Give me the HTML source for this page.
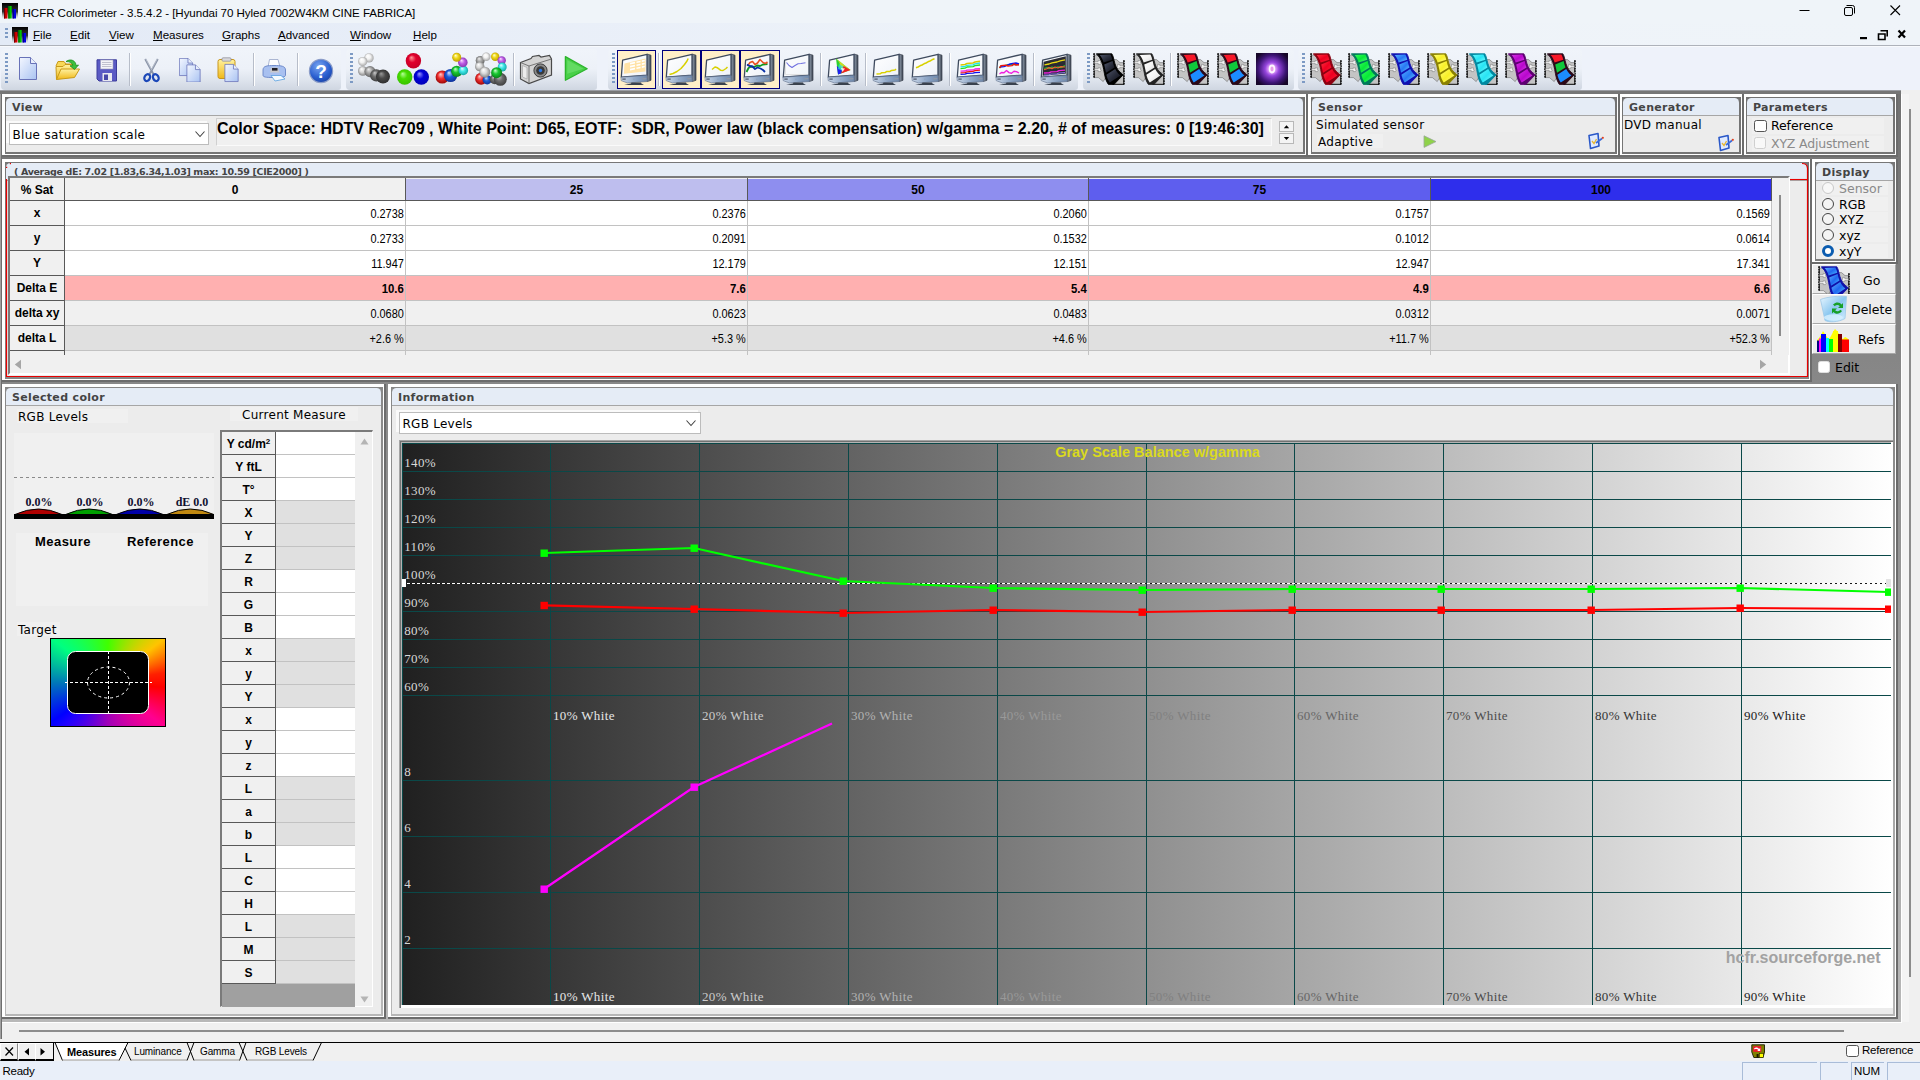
<!DOCTYPE html><html lang="en"><head><meta charset="utf-8"><title>HCFR Colorimeter</title><style>
html,body{margin:0;padding:0}
body{width:1920px;height:1080px;overflow:hidden;background:#fff;position:relative;font-family:"Liberation Sans",sans-serif;font-size:12px;color:#000}
div,span,svg{position:absolute;box-sizing:border-box}
.vd{font-family:"DejaVu Sans","Liberation Sans",sans-serif}
.t{white-space:nowrap;line-height:1}
.w{background:#fff}
.g{background:#828282}
.pnl{background:#767676}
.hd{left:1px;top:1px;right:2px;height:17px;background:#e5ecf6;border-radius:4.5px 4.5px 0 0;font:bold 11px "DejaVu Sans","Liberation Sans",sans-serif;color:#444;padding-left:6px;line-height:20px;white-space:nowrap;letter-spacing:.33px}
.hl{left:1px;right:2px;top:18px;height:1px;background:#a6a6a6}
.bd{left:1px;top:19px;right:2px;bottom:2px;background:#ececec}
.lb{background:#f0f0f0;white-space:nowrap;font:12px "DejaVu Sans","Liberation Sans",sans-serif;line-height:16px;letter-spacing:.26px}
.rb{width:12px;height:12px;border-radius:50%;border:1px solid #444;background:#f4f4f4}
.cb{width:12px;height:12px;border-radius:2.5px;border:1px solid #555;background:#fff}
.tb{top:49px;height:41px;border-radius:4px 3px 3px 4px;background:linear-gradient(#f0f4fa 0%,#edf1f8 48%,#dfe5ee 74%,#cfd6e1 100%)}
.grip{left:4px;top:4px;width:3px;height:31px;background:repeating-linear-gradient(#7d9ac4 0 2px,transparent 2px 4px)}
.sep{top:4px;width:2px;height:33px;border-left:1px solid #b7bdc9;border-right:1px solid #fff}
.sel{top:1px;height:39px;background:#ffefc8;border:1px solid #00007c}
.gh{background:#f0f0f0;font:bold 12px "Liberation Sans",sans-serif;text-align:center;white-space:nowrap}
.gc{font:13px "Liberation Sans",sans-serif;text-align:right;white-space:nowrap;transform-origin:100% 50%}
</style></head><body>
<svg width="0" height="0" style="left:0;top:0"><defs><radialGradient id="bW" cx=".5" cy=".5" r=".55" fx=".36" fy=".28"><stop offset="0" stop-color="#ffffff"/><stop offset=".45" stop-color="#f2f2f2"/><stop offset="1" stop-color="#9c9c9c"/></radialGradient><radialGradient id="bL" cx=".5" cy=".5" r=".55" fx=".36" fy=".28"><stop offset="0" stop-color="#ffffff"/><stop offset=".45" stop-color="#dadada"/><stop offset="1" stop-color="#7c7c7c"/></radialGradient><radialGradient id="bG" cx=".5" cy=".5" r=".55" fx=".36" fy=".28"><stop offset="0" stop-color="#f0f0f0"/><stop offset=".45" stop-color="#a8a8a8"/><stop offset="1" stop-color="#5e5e5e"/></radialGradient><radialGradient id="bD" cx=".5" cy=".5" r=".55" fx=".36" fy=".28"><stop offset="0" stop-color="#c8c8c8"/><stop offset=".45" stop-color="#6c6c6c"/><stop offset="1" stop-color="#3a3a3a"/></radialGradient><radialGradient id="bK" cx=".5" cy=".5" r=".55" fx=".36" fy=".28"><stop offset="0" stop-color="#9a9a9a"/><stop offset=".45" stop-color="#4a4a4a"/><stop offset="1" stop-color="#2a2a2a"/></radialGradient><radialGradient id="bR" cx=".5" cy=".5" r=".55" fx=".36" fy=".28"><stop offset="0" stop-color="#ff9a9a"/><stop offset=".45" stop-color="#e0002c"/><stop offset="1" stop-color="#c40026"/></radialGradient><radialGradient id="bGr" cx=".5" cy=".5" r=".55" fx=".36" fy=".28"><stop offset="0" stop-color="#b6ff9a"/><stop offset=".45" stop-color="#46dc00"/><stop offset="1" stop-color="#38c000"/></radialGradient><radialGradient id="bB" cx=".5" cy=".5" r=".55" fx=".36" fy=".28"><stop offset="0" stop-color="#9a9aff"/><stop offset=".45" stop-color="#0000d8"/><stop offset="1" stop-color="#0000b4"/></radialGradient><radialGradient id="cR" cx=".5" cy=".5" r=".55" fx=".36" fy=".28"><stop offset="0" stop-color="#ffd0d0"/><stop offset=".45" stop-color="#f03030"/><stop offset="1" stop-color="#900000"/></radialGradient><radialGradient id="cB" cx=".5" cy=".5" r=".55" fx=".36" fy=".28"><stop offset="0" stop-color="#d0e4ff"/><stop offset=".45" stop-color="#1c5cd8"/><stop offset="1" stop-color="#0a2a90"/></radialGradient><radialGradient id="cG" cx=".5" cy=".5" r=".55" fx=".36" fy=".28"><stop offset="0" stop-color="#d0ffd0"/><stop offset=".45" stop-color="#18c830"/><stop offset="1" stop-color="#087818"/></radialGradient><radialGradient id="cC" cx=".5" cy=".5" r=".55" fx=".36" fy=".28"><stop offset="0" stop-color="#e8ffff"/><stop offset=".45" stop-color="#40e8e8"/><stop offset="1" stop-color="#10a0a0"/></radialGradient><radialGradient id="cP" cx=".5" cy=".5" r=".55" fx=".36" fy=".28"><stop offset="0" stop-color="#ffe0ff"/><stop offset=".45" stop-color="#c060e8"/><stop offset="1" stop-color="#8030a8"/></radialGradient><radialGradient id="cY" cx=".5" cy=".5" r=".55" fx=".36" fy=".28"><stop offset="0" stop-color="#ffffd8"/><stop offset=".45" stop-color="#f0d818"/><stop offset="1" stop-color="#b89800"/></radialGradient><linearGradient id="mB" x1="0" y1="0" x2="1" y2="0"><stop offset="0" stop-color="#c9d6e8"/><stop offset=".55" stop-color="#8ea6c6"/><stop offset="1" stop-color="#6f88aa"/></linearGradient><linearGradient id="mS" x1="0" y1="0" x2="1" y2="0"><stop offset="0" stop-color="#9aa7b8"/><stop offset="1" stop-color="#3a424e"/></linearGradient><linearGradient id="mW" x1="0" y1="0" x2="1" y2="1"><stop offset="0" stop-color="#ffffff"/><stop offset="1" stop-color="#eef2f8"/></linearGradient><linearGradient id="pg" x1="0" y1="0" x2="1" y2="1"><stop offset="0" stop-color="#f4f7ff"/><stop offset="1" stop-color="#a9c3f2"/></linearGradient><linearGradient id="ic" x1="0" y1="0" x2="0" y2="1"><stop offset="0" stop-color="#000"/><stop offset=".55" stop-color="#333"/><stop offset="1" stop-color="#bbb" stop-opacity="0"/></linearGradient><radialGradient id="hp" cx=".4" cy=".3" r=".8"><stop offset="0" stop-color="#7aa6f0"/><stop offset=".6" stop-color="#2a5fd0"/><stop offset="1" stop-color="#163c9c"/></radialGradient><radialGradient id="pu" cx=".5" cy=".5" r=".6"><stop offset="0" stop-color="#ffffff"/><stop offset=".14" stop-color="#f0b4ff"/><stop offset=".36" stop-color="#9444dc"/><stop offset=".72" stop-color="#3c1474"/><stop offset="1" stop-color="#160628"/></radialGradient><linearGradient id="fo" x1="0" y1="0" x2="0" y2="1"><stop offset="0" stop-color="#fff2a0"/><stop offset="1" stop-color="#f0b818"/></linearGradient><linearGradient id="bin" x1="0" y1="0" x2="1" y2="1"><stop offset="0" stop-color="#e8f6ff"/><stop offset=".5" stop-color="#8cc8f0"/><stop offset="1" stop-color="#d8f0ff"/></linearGradient></defs></svg>
<div style="left:0px;top:0px;width:1920px;height:23px;background:#eff4f9"></div>
<svg style="left:2px;top:3px" width="16" height="16" viewBox="0 0 16 16" ><rect x="0" y="0" width="16" height="16" fill="url(#ic)"/><rect x="2" y="5" width="3.4" height="10.5" fill="#d80000"/><rect x="2" y="5" width="1.2" height="10.5" fill="#700000"/><rect x="6.3" y="3" width="3.4" height="12.5" fill="#00c000"/><rect x="6.3" y="3" width="1.2" height="12.5" fill="#006000"/><rect x="10.6" y="6" width="3.4" height="9.5" fill="#0000e0"/><rect x="10.6" y="6" width="1.2" height="9.5" fill="#000070"/></svg>
<div class="t" style="left:22.5px;top:6.5px;font-size:11.6px;letter-spacing:-.06px" id="ttl">HCFR Colorimeter - 3.5.4.2 - [Hyundai 70 Hyled 7002W4KM CINE FABRICA]</div>
<svg style="left:1795px;top:0px" width="120" height="23" viewBox="0 0 120 23" ><path d="M4.5 10.5H14.5" stroke="#000" stroke-width="1" fill="none"/><rect x="49.5" y="7.5" width="8" height="8" rx="1.5" fill="none" stroke="#000"/><path d="M51.5 5.5H57.5a2 2 0 0 1 2 2V13.5" fill="none" stroke="#000"/><path d="M95.5 5.5L105 15M105 5.5L95.5 15" stroke="#000" stroke-width="1.1" fill="none"/></svg>
<div style="left:0px;top:23px;width:1920px;height:22px;background:linear-gradient(90deg,#e3eaf6 0%,#e8eef8 25%,#eef3f9 55%,#eff4f9 100%)"></div>
<div style="left:0px;top:45px;width:1920px;height:1px;background:#aeb2ba"></div>
<div style="left:0px;top:46px;width:1920px;height:1px;background:#f8fafd"></div>
<div style="left:5px;top:28px;width:3px;height:11px;background:repeating-linear-gradient(#7d9ac4 0 2px,transparent 2px 4px)"></div>
<svg style="left:12px;top:27px" width="16" height="16" viewBox="0 0 16 16" ><rect x="0" y="0" width="16" height="16" fill="url(#ic)"/><rect x="2" y="5" width="3.4" height="10.5" fill="#d80000"/><rect x="2" y="5" width="1.2" height="10.5" fill="#700000"/><rect x="6.3" y="3" width="3.4" height="12.5" fill="#00c000"/><rect x="6.3" y="3" width="1.2" height="12.5" fill="#006000"/><rect x="10.6" y="6" width="3.4" height="9.5" fill="#0000e0"/><rect x="10.6" y="6" width="1.2" height="9.5" fill="#000070"/></svg>
<div class="t" style="left:33px;top:29px;font-size:11.6px"><span style="position:static;text-decoration:underline">F</span>ile</div>
<div class="t" style="left:70px;top:29px;font-size:11.6px"><span style="position:static;text-decoration:underline">E</span>dit</div>
<div class="t" style="left:109px;top:29px;font-size:11.6px"><span style="position:static;text-decoration:underline">V</span>iew</div>
<div class="t" style="left:153px;top:29px;font-size:11.6px"><span style="position:static;text-decoration:underline">M</span>easures</div>
<div class="t" style="left:222px;top:29px;font-size:11.6px"><span style="position:static;text-decoration:underline">G</span>raphs</div>
<div class="t" style="left:278px;top:29px;font-size:11.6px"><span style="position:static;text-decoration:underline">A</span>dvanced</div>
<div class="t" style="left:350px;top:29px;font-size:11.6px"><span style="position:static;text-decoration:underline">W</span>indow</div>
<div class="t" style="left:413px;top:29px;font-size:11.6px"><span style="position:static;text-decoration:underline">H</span>elp</div>
<svg style="left:1856px;top:26px" width="56" height="18" viewBox="0 0 56 18" ><rect x="4" y="11" width="7" height="2.2" fill="#000"/><path d="M24.5 4.8H31.2V10.5M22.5 8H29V13.5H22.5Z" fill="none" stroke="#000" stroke-width="1.6"/><path d="M42.5 4.5L49 11.5M49 4.5L42.5 11.5" stroke="#000" stroke-width="2.2" fill="none"/></svg>
<div style="left:0px;top:47px;width:1920px;height:43px;background:#eef2fa"></div>
<div class="tb" style="left:1px;width:340px"><div class="grip"></div></div>
<div class="tb" style="left:346px;width:251px"><div class="grip"></div></div>
<div class="tb" style="left:608px;width:470px"><div class="grip"></div></div>
<div class="tb" style="left:1083px;width:211px"><div class="grip"></div></div>
<div class="tb" style="left:1298px;width:284px"><div class="grip"></div></div>
<div class="sep" style="left:129px;top:53px"></div>
<div class="sep" style="left:253px;top:53px"></div>
<div class="sep" style="left:297px;top:53px"></div>
<div class="sep" style="left:513px;top:53px"></div>
<div class="sep" style="left:658px;top:53px"></div>
<div class="sep" style="left:820px;top:53px"></div>
<div class="sep" style="left:865px;top:53px"></div>
<div class="sep" style="left:949px;top:53px"></div>
<div class="sep" style="left:1033px;top:53px"></div>
<div class="sep" style="left:1170px;top:53px"></div>
<svg style="left:19px;top:57px" width="19" height="24" viewBox="0 0 19 24" ><path d="M0.5 0.5H11.5L17.5 6.5V22.5H0.5Z" fill="url(#pg)" stroke="#6872b8"/><path d="M11.5 0.5V6.5H17.5" fill="#e8eefc" stroke="#6872b8"/></svg>
<svg style="left:55px;top:58px" width="26" height="24" viewBox="0 0 26 24" ><path d="M1 8L3 3.5H9L11 6H19V9" fill="#f8d858" stroke="#c89a18"/><path d="M1.5 21.5L1 8.5H8L10 6.5H19.5L18 12" fill="url(#fo)" stroke="#c89a18"/><path d="M1.5 21.5L6 11H24.5L19.5 19.5Z" fill="url(#fo)" stroke="#c89a18"/><path d="M11 3.5C16 0 21 3 21 7.5L23.5 7L19.5 11.5L15 7.8L17.8 7.6C17.5 5 15 3.5 11 3.5Z" fill="#3cc03c" stroke="#1c8c1c" stroke-width=".8"/></svg>
<svg style="left:96px;top:59px" width="22" height="23" viewBox="0 0 22 23" ><path d="M1 .8H20.5V22H3L1 20Z" fill="#5a5ac4" stroke="#3c3c9c"/><rect x="4.5" y="1" width="12.5" height="9" fill="#f4f4f8" stroke="#9a9ab8" stroke-width=".6"/><path d="M6 3.5H15.5M6 5.5H15.5M6 7.5H15.5" stroke="#b4b4c4" stroke-width=".8"/><rect x="6.5" y="14" width="9.5" height="8" fill="#e8e8f0"/><rect x="8" y="15.5" width="4" height="5.5" fill="#4848a8"/></svg>
<svg style="left:142px;top:58px" width="19" height="25" viewBox="0 0 19 25" ><path d="M3.2 1L11.6 16.5M15.8 1L7.4 16.5" stroke="#8a94a8" stroke-width="1.9" fill="none"/><path d="M3.8 1L9.5 11.5L15.2 1" stroke="#c8ced8" stroke-width=".7" fill="none"/><ellipse cx="5.2" cy="19.6" rx="2.7" ry="3.6" fill="none" stroke="#1c48b8" stroke-width="2.2" transform="rotate(28 5.2 19.6)"/><ellipse cx="13.8" cy="19.6" rx="2.7" ry="3.6" fill="none" stroke="#1c48b8" stroke-width="2.2" transform="rotate(-28 13.8 19.6)"/></svg>
<svg style="left:179px;top:58px" width="22" height="24" viewBox="0 0 22 24" ><g transform="scale(.78)"><path d="M0.5 0.5H11.5L17.5 6.5V22.5H0.5Z" fill="url(#pg)" stroke="#6872b8"/><path d="M11.5 0.5V6.5H17.5" fill="#e8eefc" stroke="#6872b8"/></g><g transform="translate(7.5,6.5) scale(.78)"><path d="M0.5 0.5H11.5L17.5 6.5V22.5H0.5Z" fill="url(#pg)" stroke="#6872b8"/><path d="M11.5 0.5V6.5H17.5" fill="#e8eefc" stroke="#6872b8"/></g></svg>
<svg style="left:217px;top:57px" width="22" height="26" viewBox="0 0 22 26" ><rect x="1" y="2.5" width="17" height="19" rx="2" fill="url(#fo)" stroke="#c8961c"/><rect x="5" y=".8" width="9" height="3.4" rx="1" fill="#d8d8dc" stroke="#8a8a94" stroke-width=".7"/><g transform="translate(7.5,7) scale(.78)"><path d="M0.5 0.5H11.5L17.5 6.5V22.5H0.5Z" fill="url(#pg)" stroke="#6872b8"/><path d="M11.5 0.5V6.5H17.5" fill="#e8eefc" stroke="#6872b8"/></g></svg>
<svg style="left:262px;top:58px" width="25" height="24" viewBox="0 0 25 24" ><path d="M6 9L7.5 1.5H16L18 9Z" fill="#fff" stroke="#8a9ac0" stroke-width=".7"/><path d="M1 12C1 8 5 7.5 12 7.5C19 7.5 23.5 8 23.5 12V17C23.5 19 21 19.5 12 19.5C3 19.5 1 19 1 17Z" fill="#a8c0f0" stroke="#5a78c0" stroke-width=".8"/><path d="M9 9.5H16L17.5 14.5H8Z" fill="#c8c8cc"/><rect x="10" y="10" width="5.5" height="2.6" fill="#202028"/><path d="M9 17.5H19L23 21L13 23Z" fill="#f4faff" stroke="#58a0e0" stroke-width=".8"/></svg>
<svg style="left:308px;top:58px" width="26" height="26" viewBox="0 0 26 26" ><circle cx="13" cy="13" r="11.6" fill="url(#hp)" stroke="#8a9cc8" stroke-width="1.2"/><text x="13" y="20" text-anchor="middle" font-family="Liberation Sans,sans-serif" font-weight="bold" font-size="19" fill="#fff">?</text></svg>
<svg style="left:357px;top:52px" width="34" height="34" viewBox="0 0 34 34" ><circle cx="12" cy="5.9" r="4.7" fill="url(#bW)"/><circle cx="5.7" cy="9.6" r="4.6" fill="url(#bW)"/><circle cx="5.8" cy="19" r="4.8" fill="url(#bL)"/><circle cx="13" cy="19.6" r="5.6" fill="url(#bG)"/><circle cx="19.3" cy="23.4" r="6.2" fill="url(#bD)"/><circle cx="26" cy="24.6" r="7" fill="url(#bK)"/></svg>
<svg style="left:396px;top:52px" width="34" height="34" viewBox="0 0 34 34" ><circle cx="17.4" cy="8.7" r="7.7" fill="url(#bR)"/><circle cx="8.7" cy="25" r="7.7" fill="url(#bGr)"/><circle cx="25.3" cy="25" r="7.7" fill="url(#bB)"/></svg>
<svg style="left:435px;top:52px" width="34" height="34" viewBox="0 0 34 34" ><circle cx="7.2" cy="25" r="6.6" fill="url(#cR)"/><circle cx="15.6" cy="23.5" r="6.6" fill="url(#cB)"/><circle cx="21.7" cy="19.3" r="5.6" fill="url(#cG)"/><circle cx="28.3" cy="18.4" r="4.8" fill="url(#cC)"/><circle cx="27.8" cy="10.4" r="4.8" fill="url(#cP)"/><circle cx="21.7" cy="5.3" r="4.5" fill="url(#cY)"/></svg>
<svg style="left:474px;top:52px" width="34" height="34" viewBox="0 0 34 34" ><circle cx="6.2" cy="8.5" r="4.5" fill="url(#bG)"/><circle cx="12.3" cy="4.8" r="4.2" fill="url(#bW)"/><circle cx="21.2" cy="4.8" r="4.2" fill="url(#cY)"/><circle cx="27.7" cy="8.5" r="4.2" fill="url(#cP)"/><circle cx="28.2" cy="15" r="4.5" fill="url(#cC)"/><circle cx="7.1" cy="26.8" r="6" fill="url(#cR)"/><circle cx="13.2" cy="27.8" r="4.6" fill="url(#cB)"/><circle cx="20.7" cy="27.3" r="5" fill="url(#bD)"/><circle cx="26.3" cy="27.3" r="6.5" fill="url(#bD)"/><circle cx="22.6" cy="20.7" r="5.5" fill="url(#cG)"/><circle cx="5.7" cy="14.6" r="4.7" fill="url(#bL)"/><circle cx="10.8" cy="20.2" r="5.5" fill="url(#bL)"/></svg>
<svg style="left:519px;top:53px" width="34" height="32" viewBox="0 0 34 32" ><path d="M1.5 9.5L12 5.5L13.5 3.5L20 2.5L22 4L30.5 2.5L32.5 6V22L10 30.5L1.5 26Z" fill="#d4d4d4" stroke="#4a4a4a" stroke-width="1.2"/><path d="M1.5 9.5L10 13V30.5M10 13L32.5 6" fill="none" stroke="#6a6a6a" stroke-width=".9"/><path d="M3.5 12.5L8 14.5V26L3.5 24Z" fill="#ececec" stroke="#9a9a9a" stroke-width=".6"/><circle cx="21.5" cy="17.5" r="6.6" fill="#8a8a8a" stroke="#3c3c3c"/><circle cx="21.5" cy="17.5" r="4.3" fill="#3a3a3a"/><circle cx="21.5" cy="17.5" r="1.7" fill="#2a78e8"/></svg>
<svg style="left:564px;top:54.5px" width="25" height="26.5" viewBox="0 0 27 28" ><path d="M1.5 1.5L25 14.5L1.5 27Z" fill="#48d048" stroke="#2cb42c" stroke-width="1.4" stroke-linejoin="round"/><path d="M3.5 5L21 14.5L3.5 20Z" fill="#7ae47a" opacity=".55"/></svg>
<div class="sel" style="left:617px;top:50px;width:39px"></div>
<div class="sel" style="left:662px;top:50px;width:39px"></div>
<div class="sel" style="left:701px;top:50px;width:39px"></div>
<div class="sel" style="left:740px;top:50px;width:40px"></div>
<svg style="left:620px;top:53px" width="32" height="33" viewBox="0 0 32 33" ><path d="M27 1L31 2.2V27.3L27.3 28.6Z" fill="url(#mS)" stroke="#39414d" stroke-width=".7"/><path d="M2.6 7.2L27 1.3V22.2L1.3 24.2Z" fill="url(#mW)" stroke="#3e4a5e" stroke-width="1.3" stroke-linejoin="round"/><g fill="#ffe2a6"><path d="M4.5 10.5L25.5 5.5V18.5L3.8 20.8Z"/></g><g fill="#fff"><rect x="10" y="12" width="5" height="1.6" transform="skewY(-12)" /><rect x="10" y="15" width="5" height="1.6" transform="skewY(-12)"/><rect x="10" y="18" width="5" height="1.6" transform="skewY(-12)"/><rect x="16.5" y="12" width="4" height="1.6" transform="skewY(-12)"/><rect x="16.5" y="15" width="4" height="1.6" transform="skewY(-12)"/><rect x="16.5" y="18" width="4" height="1.6" transform="skewY(-12)"/><rect x="21.8" y="12" width="3" height="1.6" transform="skewY(-12)"/><rect x="21.8" y="15" width="3" height="1.6" transform="skewY(-12)"/><rect x="21.8" y="18" width="3" height="1.6" transform="skewY(-12)"/></g><path d="M1 24.3L27 22.3L27.4 28.5L7.5 30L1.2 27.6Z" fill="url(#mB)" stroke="#5a6c88" stroke-width=".6"/><rect x="2.3" y="25.5" width="3.4" height="1.2" fill="#4a5568"/><rect x="22.3" y="24.9" width="4" height="1.5" fill="#8e98a8"/><rect x="13.2" y="25.6" width="1.3" height="1.2" fill="#8da0bc"/><path d="M11.5 29.6H21L21.4 30.6L24 32H4L11 30.6Z" fill="#3a424e"/></svg>
<svg style="left:665px;top:53px" width="32" height="33" viewBox="0 0 32 33" ><path d="M27 1L31 2.2V27.3L27.3 28.6Z" fill="url(#mS)" stroke="#39414d" stroke-width=".7"/><path d="M2.6 7.2L27 1.3V22.2L1.3 24.2Z" fill="url(#mW)" stroke="#3e4a5e" stroke-width="1.3" stroke-linejoin="round"/><polyline points="4.5,21.5 8,20.5 12,18.5 16,15.5 19.5,11.5 22,8 23.2,5.5" fill="none" stroke="#d8d000" stroke-width="1.5" stroke-linejoin="round"/><path d="M1 24.3L27 22.3L27.4 28.5L7.5 30L1.2 27.6Z" fill="url(#mB)" stroke="#5a6c88" stroke-width=".6"/><rect x="2.3" y="25.5" width="3.4" height="1.2" fill="#4a5568"/><rect x="22.3" y="24.9" width="4" height="1.5" fill="#8e98a8"/><rect x="13.2" y="25.6" width="1.3" height="1.2" fill="#8da0bc"/><path d="M11.5 29.6H21L21.4 30.6L24 32H4L11 30.6Z" fill="#3a424e"/></svg>
<svg style="left:704px;top:53px" width="32" height="33" viewBox="0 0 32 33" ><path d="M27 1L31 2.2V27.3L27.3 28.6Z" fill="url(#mS)" stroke="#39414d" stroke-width=".7"/><path d="M2.6 7.2L27 1.3V22.2L1.3 24.2Z" fill="url(#mW)" stroke="#3e4a5e" stroke-width="1.3" stroke-linejoin="round"/><polyline points="8,16.5 11,14 13.5,14.8 16.5,17.2 19,17.5 22,15.5 23.5,14" fill="none" stroke="#d8d000" stroke-width="1.5" stroke-linejoin="round"/><path d="M1 24.3L27 22.3L27.4 28.5L7.5 30L1.2 27.6Z" fill="url(#mB)" stroke="#5a6c88" stroke-width=".6"/><rect x="2.3" y="25.5" width="3.4" height="1.2" fill="#4a5568"/><rect x="22.3" y="24.9" width="4" height="1.5" fill="#8e98a8"/><rect x="13.2" y="25.6" width="1.3" height="1.2" fill="#8da0bc"/><path d="M11.5 29.6H21L21.4 30.6L24 32H4L11 30.6Z" fill="#3a424e"/></svg>
<svg style="left:743px;top:53px" width="32" height="33" viewBox="0 0 32 33" ><path d="M27 1L31 2.2V27.3L27.3 28.6Z" fill="url(#mS)" stroke="#39414d" stroke-width=".7"/><path d="M2.6 7.2L27 1.3V22.2L1.3 24.2Z" fill="url(#mW)" stroke="#3e4a5e" stroke-width="1.3" stroke-linejoin="round"/><polyline points="3.5,19 5.5,15 8,13.5 11,14 14,12.5 17,13 20,11.5 24.5,11" fill="none" stroke="#109820" stroke-width="1.8" stroke-linejoin="round"/><polyline points="4.5,13 7,9.5 9.5,8.5 12,11.5 14.5,10 17,6.5 20,9.5 22.5,10.5 24.5,9" fill="none" stroke="#e85020" stroke-width="1.6" stroke-linejoin="round"/><polyline points="4,11.5 6.5,13 9.5,13.5 12,16 14.5,14.5 17.5,15.5 20,17 22,19" fill="none" stroke="#0830a8" stroke-width="1.8" stroke-linejoin="round"/><path d="M1 24.3L27 22.3L27.4 28.5L7.5 30L1.2 27.6Z" fill="url(#mB)" stroke="#5a6c88" stroke-width=".6"/><rect x="2.3" y="25.5" width="3.4" height="1.2" fill="#4a5568"/><rect x="22.3" y="24.9" width="4" height="1.5" fill="#8e98a8"/><rect x="13.2" y="25.6" width="1.3" height="1.2" fill="#8da0bc"/><path d="M11.5 29.6H21L21.4 30.6L24 32H4L11 30.6Z" fill="#3a424e"/></svg>
<svg style="left:782px;top:53px" width="32" height="33" viewBox="0 0 32 33" ><path d="M27 1L31 2.2V27.3L27.3 28.6Z" fill="url(#mS)" stroke="#39414d" stroke-width=".7"/><path d="M2.6 7.2L27 1.3V22.2L1.3 24.2Z" fill="url(#mW)" stroke="#3e4a5e" stroke-width="1.3" stroke-linejoin="round"/><path d="M3.5 9V21.5H24.5" fill="none" stroke="#d8d8d8" stroke-width=".7"/><polyline points="4.5,9.5 7,12.5 10,14.5 13,12.5 16,10.8 19,10.5 23.5,9.8" fill="none" stroke="#7070e0" stroke-width="1.1" stroke-linejoin="round"/><path d="M1 24.3L27 22.3L27.4 28.5L7.5 30L1.2 27.6Z" fill="url(#mB)" stroke="#5a6c88" stroke-width=".6"/><rect x="2.3" y="25.5" width="3.4" height="1.2" fill="#4a5568"/><rect x="22.3" y="24.9" width="4" height="1.5" fill="#8e98a8"/><rect x="13.2" y="25.6" width="1.3" height="1.2" fill="#8da0bc"/><path d="M11.5 29.6H21L21.4 30.6L24 32H4L11 30.6Z" fill="#3a424e"/></svg>
<svg style="left:827px;top:53px" width="32" height="33" viewBox="0 0 32 33" ><path d="M27 1L31 2.2V27.3L27.3 28.6Z" fill="url(#mS)" stroke="#39414d" stroke-width=".7"/><path d="M2.6 7.2L27 1.3V22.2L1.3 24.2Z" fill="url(#mW)" stroke="#3e4a5e" stroke-width="1.3" stroke-linejoin="round"/><path d="M9 5.5L23.5 17L11 21.5Z" fill="#30d030"/><path d="M9 5.5L23.5 17L16 19.2L12 9Z" fill="#f0e020" opacity=".8"/><path d="M23.5 17L16.5 13L14 20.4Z" fill="#f02020"/><path d="M11 21.5L9.8 13L15 17L14 20.4Z" fill="#2020f0"/><path d="M12 11L16.5 13.5L15 17.5L11 16Z" fill="#30e0e0" opacity=".7"/><path d="M14 15L18 15.5L15.5 19Z" fill="#fff" opacity=".85"/><path d="M1 24.3L27 22.3L27.4 28.5L7.5 30L1.2 27.6Z" fill="url(#mB)" stroke="#5a6c88" stroke-width=".6"/><rect x="2.3" y="25.5" width="3.4" height="1.2" fill="#4a5568"/><rect x="22.3" y="24.9" width="4" height="1.5" fill="#8e98a8"/><rect x="13.2" y="25.6" width="1.3" height="1.2" fill="#8da0bc"/><path d="M11.5 29.6H21L21.4 30.6L24 32H4L11 30.6Z" fill="#3a424e"/></svg>
<svg style="left:872px;top:53px" width="32" height="33" viewBox="0 0 32 33" ><path d="M27 1L31 2.2V27.3L27.3 28.6Z" fill="url(#mS)" stroke="#39414d" stroke-width=".7"/><path d="M2.6 7.2L27 1.3V22.2L1.3 24.2Z" fill="url(#mW)" stroke="#3e4a5e" stroke-width="1.3" stroke-linejoin="round"/><polyline points="4.5,21 8,20.8 9.5,19.8 13,19.6 14.5,18.6 18,18.4 19.5,17.4 23,17 24,16" fill="none" stroke="#d8d000" stroke-width="1.5" stroke-linejoin="round"/><path d="M1 24.3L27 22.3L27.4 28.5L7.5 30L1.2 27.6Z" fill="url(#mB)" stroke="#5a6c88" stroke-width=".6"/><rect x="2.3" y="25.5" width="3.4" height="1.2" fill="#4a5568"/><rect x="22.3" y="24.9" width="4" height="1.5" fill="#8e98a8"/><rect x="13.2" y="25.6" width="1.3" height="1.2" fill="#8da0bc"/><path d="M11.5 29.6H21L21.4 30.6L24 32H4L11 30.6Z" fill="#3a424e"/></svg>
<svg style="left:911px;top:53px" width="32" height="33" viewBox="0 0 32 33" ><path d="M27 1L31 2.2V27.3L27.3 28.6Z" fill="url(#mS)" stroke="#39414d" stroke-width=".7"/><path d="M2.6 7.2L27 1.3V22.2L1.3 24.2Z" fill="url(#mW)" stroke="#3e4a5e" stroke-width="1.3" stroke-linejoin="round"/><polyline points="5,14.8 7,14 9,12.8 11,12 13,10.8 15,10 17,8.8 19,8 21,6.8 23.5,5.8" fill="none" stroke="#d8d000" stroke-width="1.5" stroke-linejoin="round"/><path d="M1 24.3L27 22.3L27.4 28.5L7.5 30L1.2 27.6Z" fill="url(#mB)" stroke="#5a6c88" stroke-width=".6"/><rect x="2.3" y="25.5" width="3.4" height="1.2" fill="#4a5568"/><rect x="22.3" y="24.9" width="4" height="1.5" fill="#8e98a8"/><rect x="13.2" y="25.6" width="1.3" height="1.2" fill="#8da0bc"/><path d="M11.5 29.6H21L21.4 30.6L24 32H4L11 30.6Z" fill="#3a424e"/></svg>
<svg style="left:956px;top:53px" width="32" height="33" viewBox="0 0 32 33" ><path d="M27 1L31 2.2V27.3L27.3 28.6Z" fill="url(#mS)" stroke="#39414d" stroke-width=".7"/><path d="M2.6 7.2L27 1.3V22.2L1.3 24.2Z" fill="url(#mW)" stroke="#3e4a5e" stroke-width="1.3" stroke-linejoin="round"/><polyline points="4.5,12 9,11.5 11,10.5 17,10 19,9 24,8.2" fill="none" stroke="#d8c800" stroke-width="1.4" stroke-linejoin="round"/><polyline points="4.5,13.8 9,13.4 11,12.3 17,11.8 19,10.8 24,10" fill="none" stroke="#20e8e8" stroke-width="1.3" stroke-linejoin="round"/><polyline points="4.5,15.6 9,15.2 11,14 17,13.6 19,12.6 24,12" fill="none" stroke="#20e020" stroke-width="1.3" stroke-linejoin="round"/><polyline points="4.5,18.2 9,18 11,17.2 17,17 19,16 24,15.6" fill="none" stroke="#f020e0" stroke-width="1.3" stroke-linejoin="round"/><polyline points="4.5,19.8 9,19.6 11,18.8 17,18.4 19,17.6 24,17.2" fill="none" stroke="#f01010" stroke-width="1.3" stroke-linejoin="round"/><polyline points="4.5,21.4 9,21.2 11,20.4 17,20.2 19,19.6 24,19.4" fill="none" stroke="#1010f0" stroke-width="1.3" stroke-linejoin="round"/><path d="M1 24.3L27 22.3L27.4 28.5L7.5 30L1.2 27.6Z" fill="url(#mB)" stroke="#5a6c88" stroke-width=".6"/><rect x="2.3" y="25.5" width="3.4" height="1.2" fill="#4a5568"/><rect x="22.3" y="24.9" width="4" height="1.5" fill="#8e98a8"/><rect x="13.2" y="25.6" width="1.3" height="1.2" fill="#8da0bc"/><path d="M11.5 29.6H21L21.4 30.6L24 32H4L11 30.6Z" fill="#3a424e"/></svg>
<svg style="left:995px;top:53px" width="32" height="33" viewBox="0 0 32 33" ><path d="M27 1L31 2.2V27.3L27.3 28.6Z" fill="url(#mS)" stroke="#39414d" stroke-width=".7"/><path d="M2.6 7.2L27 1.3V22.2L1.3 24.2Z" fill="url(#mW)" stroke="#3e4a5e" stroke-width="1.3" stroke-linejoin="round"/><polyline points="4.5,15.2 6,13 10,12.6 13,11.8 17,11.6 20,11.2 24,11.6" fill="none" stroke="#20d020" stroke-width="1.4" stroke-linejoin="round"/><polyline points="5,14 9,13.6 12,12.4 15,11 18,10.4 21,10 24,11" fill="none" stroke="#1010f0" stroke-width="1.4" stroke-linejoin="round"/><polyline points="4.5,14.8 6,12.6 11,12.2 13,13 17,12.6 19,11 21,12 24,11.8" fill="none" stroke="#f01010" stroke-width="1.4" stroke-linejoin="round"/><polyline points="4.5,20.8 6.5,19.5 9,19.8 11.5,17.5 14,19.6 16.5,20.2 19,18.2 21.5,18.6 24,20" fill="none" stroke="#f020e0" stroke-width="1.4" stroke-linejoin="round"/><path d="M1 24.3L27 22.3L27.4 28.5L7.5 30L1.2 27.6Z" fill="url(#mB)" stroke="#5a6c88" stroke-width=".6"/><rect x="2.3" y="25.5" width="3.4" height="1.2" fill="#4a5568"/><rect x="22.3" y="24.9" width="4" height="1.5" fill="#8e98a8"/><rect x="13.2" y="25.6" width="1.3" height="1.2" fill="#8da0bc"/><path d="M11.5 29.6H21L21.4 30.6L24 32H4L11 30.6Z" fill="#3a424e"/></svg>
<svg style="left:1040px;top:53px" width="32" height="33" viewBox="0 0 32 33" ><path d="M27 1L31 2.2V27.3L27.3 28.6Z" fill="url(#mS)" stroke="#39414d" stroke-width=".7"/><path d="M2.6 7.2L27 1.3V22.2L1.3 24.2Z" fill="url(#mW)" stroke="#3e4a5e" stroke-width="1.3" stroke-linejoin="round"/><path d="M3.6 8.8L25.8 3.2V20.8L2.6 22.8Z" fill="#2a2a32"/><polyline points="4.5,11.8 9,11 12,9.8 17,9 20,7.8 25,6.8" fill="none" stroke="#e8d810" stroke-width="1.3" stroke-linejoin="round"/><polyline points="4,15.5 7,14.6 9,15.6 12,14 15,15 18,13.8 21,14.6 25,12.5" fill="none" stroke="#20b830" stroke-width="1.3" stroke-linejoin="round"/><polyline points="4,16.8 7,15.8 9,14.6 12,15.6 15,14 18,15 21,13.6 25,14" fill="none" stroke="#f06030" stroke-width="1.2" stroke-linejoin="round"/><polyline points="4,20 9,19.8 11,18.8 17,18.6 19,17.6 25,17.2" fill="none" stroke="#f020e0" stroke-width="1.3" stroke-linejoin="round"/><polyline points="4,22 9,21.8 11,21 17,20.8 19,20 25,19.6" fill="none" stroke="#8070e0" stroke-width="1.2" stroke-linejoin="round"/><path d="M1 24.3L27 22.3L27.4 28.5L7.5 30L1.2 27.6Z" fill="url(#mB)" stroke="#5a6c88" stroke-width=".6"/><rect x="2.3" y="25.5" width="3.4" height="1.2" fill="#4a5568"/><rect x="22.3" y="24.9" width="4" height="1.5" fill="#8e98a8"/><rect x="13.2" y="25.6" width="1.3" height="1.2" fill="#8da0bc"/><path d="M11.5 29.6H21L21.4 30.6L24 32H4L11 30.6Z" fill="#3a424e"/></svg>
<svg style="left:1093px;top:53px" width="32" height="32" viewBox="0 0 32 32" ><defs><linearGradient id="fga" x1="0" y1="0" x2="1" y2="1"><stop offset="0" stop-color="#50566a"/><stop offset=".5" stop-color="#2a2e3c"/><stop offset="1" stop-color="#0c0c14"/></linearGradient></defs><path d="M1.4 2.2H8.5L13 24L10.2 28.6L5.4 24.6H1.4Z" fill="#c4c4c4" stroke="#5a5a5a" stroke-width=".5"/><path d="M1 .2V24.9" stroke="#111" stroke-width="1.5" stroke-dasharray="1.7 .8"/><path d="M1.3 .2V24.9" stroke="#111" stroke-width=".7"/><path d="M1.6 8.6H5.2V7.4H7.4V9.2Q8.8 10.2 7.4 11.4H5.2V10.4H1.6ZM1.6 15.6H5.2V14.8H7.4V16.4Q8.8 17.4 7.4 18.6H5.2V17.4H1.6Z" fill="#f2f2f2" stroke="#6a6a6a" stroke-width=".45"/><path d="M19.5 6.6H23.5L27 9.6H30.6V31.5H19.5Z" fill="#c4c4c4" stroke="#5a5a5a" stroke-width=".5"/><path d="M31 7.3V31.9" stroke="#111" stroke-width="1.5" stroke-dasharray="1.7 .8"/><path d="M30.7 7.3V31.9" stroke="#111" stroke-width=".7"/><path d="M19.5 31.3H31" stroke="#111" stroke-width="1"/><path d="M30.4 12.6H26.8V11.4H24.6V13.2Q23.2 14.2 24.6 15.4H26.8V14.4H30.4ZM30.4 19.6H26.8V18.8H24.6V20.4Q23.2 21.4 24.6 22.6H26.8V21.4H30.4Z" fill="#f2f2f2" stroke="#6a6a6a" stroke-width=".45"/><path d="M3.3 .8H18.8C22 5.2 20 15 30.2 21.8L21 31.4H15.4C9.4 24 12.8 9 3.3 .8Z" fill="#000" stroke="#000" stroke-width=".9" stroke-linejoin="round"/><path d="M6.5 2.0L7.5 3.1L8.3 4.3L9.0 5.5L9.6 6.8L10.1 8.1L10.6 9.5L19.3 6.7L19.0 5.7L18.8 4.8L18.5 3.9L18.1 3.1L17.8 2.3L17.3 1.6Z" fill="url(#fga)"/><path d="M11.2 11.4L11.5 12.8L11.8 14.2L12.1 15.6L12.4 17.0L12.7 18.4L13.0 19.8L21.5 14.4L21.1 13.3L20.7 12.2L20.4 11.2L20.1 10.1L19.9 9.1L19.6 8.1Z" fill="url(#fga)"/><path d="M13.4 21.7L13.8 23.2L14.2 24.5L14.7 25.9L15.3 27.1L16.0 28.4L16.8 29.5L27.4 22.4L26.3 21.4L25.2 20.4L24.3 19.3L23.5 18.2L22.8 17.0L22.2 15.9Z" fill="url(#fga)"/></svg>
<svg style="left:1133px;top:53px" width="32" height="32" viewBox="0 0 32 32" ><defs><linearGradient id="fgb" x1="0" y1="0" x2="1" y2="1"><stop offset="0" stop-color="#ffffff"/><stop offset=".5" stop-color="#f4f4f4"/><stop offset="1" stop-color="#d8d8d8"/></linearGradient></defs><path d="M1.4 2.2H8.5L13 24L10.2 28.6L5.4 24.6H1.4Z" fill="#c4c4c4" stroke="#5a5a5a" stroke-width=".5"/><path d="M1 .2V24.9" stroke="#111" stroke-width="1.5" stroke-dasharray="1.7 .8"/><path d="M1.3 .2V24.9" stroke="#111" stroke-width=".7"/><path d="M1.6 8.6H5.2V7.4H7.4V9.2Q8.8 10.2 7.4 11.4H5.2V10.4H1.6ZM1.6 15.6H5.2V14.8H7.4V16.4Q8.8 17.4 7.4 18.6H5.2V17.4H1.6Z" fill="#f2f2f2" stroke="#6a6a6a" stroke-width=".45"/><path d="M19.5 6.6H23.5L27 9.6H30.6V31.5H19.5Z" fill="#c4c4c4" stroke="#5a5a5a" stroke-width=".5"/><path d="M31 7.3V31.9" stroke="#111" stroke-width="1.5" stroke-dasharray="1.7 .8"/><path d="M30.7 7.3V31.9" stroke="#111" stroke-width=".7"/><path d="M19.5 31.3H31" stroke="#111" stroke-width="1"/><path d="M30.4 12.6H26.8V11.4H24.6V13.2Q23.2 14.2 24.6 15.4H26.8V14.4H30.4ZM30.4 19.6H26.8V18.8H24.6V20.4Q23.2 21.4 24.6 22.6H26.8V21.4H30.4Z" fill="#f2f2f2" stroke="#6a6a6a" stroke-width=".45"/><path d="M3.3 .8H18.8C22 5.2 20 15 30.2 21.8L21 31.4H15.4C9.4 24 12.8 9 3.3 .8Z" fill="#222" stroke="#222" stroke-width=".9" stroke-linejoin="round"/><path d="M6.5 2.0L7.5 3.1L8.3 4.3L9.0 5.5L9.6 6.8L10.1 8.1L10.6 9.5L19.3 6.7L19.0 5.7L18.8 4.8L18.5 3.9L18.1 3.1L17.8 2.3L17.3 1.6Z" fill="url(#fgb)"/><path d="M11.2 11.4L11.5 12.8L11.8 14.2L12.1 15.6L12.4 17.0L12.7 18.4L13.0 19.8L21.5 14.4L21.1 13.3L20.7 12.2L20.4 11.2L20.1 10.1L19.9 9.1L19.6 8.1Z" fill="url(#fgb)"/><path d="M13.4 21.7L13.8 23.2L14.2 24.5L14.7 25.9L15.3 27.1L16.0 28.4L16.8 29.5L27.4 22.4L26.3 21.4L25.2 20.4L24.3 19.3L23.5 18.2L22.8 17.0L22.2 15.9Z" fill="url(#fgb)"/></svg>
<svg style="left:1177px;top:53px" width="32" height="32" viewBox="0 0 32 32" ><defs><linearGradient id="fgc" x1="0" y1="0" x2="1" y2="1"><stop offset="0" stop-color="#ff2030"/><stop offset=".5" stop-color="#ff2030"/><stop offset="1" stop-color="#ff2030"/></linearGradient></defs><path d="M1.4 2.2H8.5L13 24L10.2 28.6L5.4 24.6H1.4Z" fill="#c4c4c4" stroke="#5a5a5a" stroke-width=".5"/><path d="M1 .2V24.9" stroke="#111" stroke-width="1.5" stroke-dasharray="1.7 .8"/><path d="M1.3 .2V24.9" stroke="#111" stroke-width=".7"/><path d="M1.6 8.6H5.2V7.4H7.4V9.2Q8.8 10.2 7.4 11.4H5.2V10.4H1.6ZM1.6 15.6H5.2V14.8H7.4V16.4Q8.8 17.4 7.4 18.6H5.2V17.4H1.6Z" fill="#f2f2f2" stroke="#6a6a6a" stroke-width=".45"/><path d="M19.5 6.6H23.5L27 9.6H30.6V31.5H19.5Z" fill="#c4c4c4" stroke="#5a5a5a" stroke-width=".5"/><path d="M31 7.3V31.9" stroke="#111" stroke-width="1.5" stroke-dasharray="1.7 .8"/><path d="M30.7 7.3V31.9" stroke="#111" stroke-width=".7"/><path d="M19.5 31.3H31" stroke="#111" stroke-width="1"/><path d="M30.4 12.6H26.8V11.4H24.6V13.2Q23.2 14.2 24.6 15.4H26.8V14.4H30.4ZM30.4 19.6H26.8V18.8H24.6V20.4Q23.2 21.4 24.6 22.6H26.8V21.4H30.4Z" fill="#f2f2f2" stroke="#6a6a6a" stroke-width=".45"/><path d="M3.3 .8H18.8C22 5.2 20 15 30.2 21.8L21 31.4H15.4C9.4 24 12.8 9 3.3 .8Z" fill="#2a0818" stroke="#2a0818" stroke-width=".9" stroke-linejoin="round"/><path d="M6.5 2.0L7.5 3.1L8.3 4.3L9.0 5.5L9.6 6.8L10.1 8.1L10.6 9.5L19.3 6.7L19.0 5.7L18.8 4.8L18.5 3.9L18.1 3.1L17.8 2.3L17.3 1.6Z" fill="#f81828"/><path d="M11.2 11.4L11.5 12.8L11.8 14.2L12.1 15.6L12.4 17.0L12.7 18.4L13.0 19.8L21.5 14.4L21.1 13.3L20.7 12.2L20.4 11.2L20.1 10.1L19.9 9.1L19.6 8.1Z" fill="#10c83c"/><path d="M13.4 21.7L13.8 23.2L14.2 24.5L14.7 25.9L15.3 27.1L16.0 28.4L16.8 29.5L27.4 22.4L26.3 21.4L25.2 20.4L24.3 19.3L23.5 18.2L22.8 17.0L22.2 15.9Z" fill="#1c8cff"/></svg>
<svg style="left:1217px;top:53px" width="32" height="32" viewBox="0 0 32 32" ><defs><linearGradient id="fgd" x1="0" y1="0" x2="1" y2="1"><stop offset="0" stop-color="#ff2030"/><stop offset=".5" stop-color="#ff2030"/><stop offset="1" stop-color="#ff2030"/></linearGradient></defs><path d="M1.4 2.2H8.5L13 24L10.2 28.6L5.4 24.6H1.4Z" fill="#c4c4c4" stroke="#5a5a5a" stroke-width=".5"/><path d="M1 .2V24.9" stroke="#111" stroke-width="1.5" stroke-dasharray="1.7 .8"/><path d="M1.3 .2V24.9" stroke="#111" stroke-width=".7"/><path d="M1.6 8.6H5.2V7.4H7.4V9.2Q8.8 10.2 7.4 11.4H5.2V10.4H1.6ZM1.6 15.6H5.2V14.8H7.4V16.4Q8.8 17.4 7.4 18.6H5.2V17.4H1.6Z" fill="#f2f2f2" stroke="#6a6a6a" stroke-width=".45"/><path d="M19.5 6.6H23.5L27 9.6H30.6V31.5H19.5Z" fill="#c4c4c4" stroke="#5a5a5a" stroke-width=".5"/><path d="M31 7.3V31.9" stroke="#111" stroke-width="1.5" stroke-dasharray="1.7 .8"/><path d="M30.7 7.3V31.9" stroke="#111" stroke-width=".7"/><path d="M19.5 31.3H31" stroke="#111" stroke-width="1"/><path d="M30.4 12.6H26.8V11.4H24.6V13.2Q23.2 14.2 24.6 15.4H26.8V14.4H30.4ZM30.4 19.6H26.8V18.8H24.6V20.4Q23.2 21.4 24.6 22.6H26.8V21.4H30.4Z" fill="#f2f2f2" stroke="#6a6a6a" stroke-width=".45"/><path d="M3.3 .8H18.8C22 5.2 20 15 30.2 21.8L21 31.4H15.4C9.4 24 12.8 9 3.3 .8Z" fill="#2a0818" stroke="#2a0818" stroke-width=".9" stroke-linejoin="round"/><path d="M6.5 2.0L7.5 3.1L8.3 4.3L9.0 5.5L9.6 6.8L10.1 8.1L10.6 9.5L19.3 6.7L19.0 5.7L18.8 4.8L18.5 3.9L18.1 3.1L17.8 2.3L17.3 1.6Z" fill="#f81828"/><path d="M11.2 11.4L11.5 12.8L11.8 14.2L12.1 15.6L12.4 17.0L12.7 18.4L13.0 19.8L21.5 14.4L21.1 13.3L20.7 12.2L20.4 11.2L20.1 10.1L19.9 9.1L19.6 8.1Z" fill="#10c83c"/><path d="M13.4 21.7L13.8 23.2L14.2 24.5L14.7 25.9L15.3 27.1L16.0 28.4L16.8 29.5L27.4 22.4L26.3 21.4L25.2 20.4L24.3 19.3L23.5 18.2L22.8 17.0L22.2 15.9Z" fill="#1c8cff"/></svg>
<svg style="left:1310px;top:53px" width="32" height="32" viewBox="0 0 32 32" ><defs><linearGradient id="fge" x1="0" y1="0" x2="1" y2="1"><stop offset="0" stop-color="#ff3040"/><stop offset=".5" stop-color="#ee0020"/><stop offset="1" stop-color="#ff2038"/></linearGradient></defs><path d="M1.4 2.2H8.5L13 24L10.2 28.6L5.4 24.6H1.4Z" fill="#c4c4c4" stroke="#5a5a5a" stroke-width=".5"/><path d="M1 .2V24.9" stroke="#111" stroke-width="1.5" stroke-dasharray="1.7 .8"/><path d="M1.3 .2V24.9" stroke="#111" stroke-width=".7"/><path d="M1.6 8.6H5.2V7.4H7.4V9.2Q8.8 10.2 7.4 11.4H5.2V10.4H1.6ZM1.6 15.6H5.2V14.8H7.4V16.4Q8.8 17.4 7.4 18.6H5.2V17.4H1.6Z" fill="#f2f2f2" stroke="#6a6a6a" stroke-width=".45"/><path d="M19.5 6.6H23.5L27 9.6H30.6V31.5H19.5Z" fill="#c4c4c4" stroke="#5a5a5a" stroke-width=".5"/><path d="M31 7.3V31.9" stroke="#111" stroke-width="1.5" stroke-dasharray="1.7 .8"/><path d="M30.7 7.3V31.9" stroke="#111" stroke-width=".7"/><path d="M19.5 31.3H31" stroke="#111" stroke-width="1"/><path d="M30.4 12.6H26.8V11.4H24.6V13.2Q23.2 14.2 24.6 15.4H26.8V14.4H30.4ZM30.4 19.6H26.8V18.8H24.6V20.4Q23.2 21.4 24.6 22.6H26.8V21.4H30.4Z" fill="#f2f2f2" stroke="#6a6a6a" stroke-width=".45"/><path d="M3.3 .8H18.8C22 5.2 20 15 30.2 21.8L21 31.4H15.4C9.4 24 12.8 9 3.3 .8Z" fill="#8c0010" stroke="#8c0010" stroke-width=".9" stroke-linejoin="round"/><path d="M6.5 2.0L7.5 3.1L8.3 4.3L9.0 5.5L9.6 6.8L10.1 8.1L10.6 9.5L19.3 6.7L19.0 5.7L18.8 4.8L18.5 3.9L18.1 3.1L17.8 2.3L17.3 1.6Z" fill="url(#fge)"/><path d="M11.2 11.4L11.5 12.8L11.8 14.2L12.1 15.6L12.4 17.0L12.7 18.4L13.0 19.8L21.5 14.4L21.1 13.3L20.7 12.2L20.4 11.2L20.1 10.1L19.9 9.1L19.6 8.1Z" fill="url(#fge)"/><path d="M13.4 21.7L13.8 23.2L14.2 24.5L14.7 25.9L15.3 27.1L16.0 28.4L16.8 29.5L27.4 22.4L26.3 21.4L25.2 20.4L24.3 19.3L23.5 18.2L22.8 17.0L22.2 15.9Z" fill="url(#fge)"/></svg>
<svg style="left:1348px;top:53px" width="32" height="32" viewBox="0 0 32 32" ><defs><linearGradient id="fgf" x1="0" y1="0" x2="1" y2="1"><stop offset="0" stop-color="#30ff58"/><stop offset=".5" stop-color="#08e838"/><stop offset="1" stop-color="#50ff80"/></linearGradient></defs><path d="M1.4 2.2H8.5L13 24L10.2 28.6L5.4 24.6H1.4Z" fill="#c4c4c4" stroke="#5a5a5a" stroke-width=".5"/><path d="M1 .2V24.9" stroke="#111" stroke-width="1.5" stroke-dasharray="1.7 .8"/><path d="M1.3 .2V24.9" stroke="#111" stroke-width=".7"/><path d="M1.6 8.6H5.2V7.4H7.4V9.2Q8.8 10.2 7.4 11.4H5.2V10.4H1.6ZM1.6 15.6H5.2V14.8H7.4V16.4Q8.8 17.4 7.4 18.6H5.2V17.4H1.6Z" fill="#f2f2f2" stroke="#6a6a6a" stroke-width=".45"/><path d="M19.5 6.6H23.5L27 9.6H30.6V31.5H19.5Z" fill="#c4c4c4" stroke="#5a5a5a" stroke-width=".5"/><path d="M31 7.3V31.9" stroke="#111" stroke-width="1.5" stroke-dasharray="1.7 .8"/><path d="M30.7 7.3V31.9" stroke="#111" stroke-width=".7"/><path d="M19.5 31.3H31" stroke="#111" stroke-width="1"/><path d="M30.4 12.6H26.8V11.4H24.6V13.2Q23.2 14.2 24.6 15.4H26.8V14.4H30.4ZM30.4 19.6H26.8V18.8H24.6V20.4Q23.2 21.4 24.6 22.6H26.8V21.4H30.4Z" fill="#f2f2f2" stroke="#6a6a6a" stroke-width=".45"/><path d="M3.3 .8H18.8C22 5.2 20 15 30.2 21.8L21 31.4H15.4C9.4 24 12.8 9 3.3 .8Z" fill="#00785a" stroke="#00785a" stroke-width=".9" stroke-linejoin="round"/><path d="M6.5 2.0L7.5 3.1L8.3 4.3L9.0 5.5L9.6 6.8L10.1 8.1L10.6 9.5L19.3 6.7L19.0 5.7L18.8 4.8L18.5 3.9L18.1 3.1L17.8 2.3L17.3 1.6Z" fill="url(#fgf)"/><path d="M11.2 11.4L11.5 12.8L11.8 14.2L12.1 15.6L12.4 17.0L12.7 18.4L13.0 19.8L21.5 14.4L21.1 13.3L20.7 12.2L20.4 11.2L20.1 10.1L19.9 9.1L19.6 8.1Z" fill="url(#fgf)"/><path d="M13.4 21.7L13.8 23.2L14.2 24.5L14.7 25.9L15.3 27.1L16.0 28.4L16.8 29.5L27.4 22.4L26.3 21.4L25.2 20.4L24.3 19.3L23.5 18.2L22.8 17.0L22.2 15.9Z" fill="url(#fgf)"/></svg>
<svg style="left:1388px;top:53px" width="32" height="32" viewBox="0 0 32 32" ><defs><linearGradient id="fgg" x1="0" y1="0" x2="1" y2="1"><stop offset="0" stop-color="#58b0ff"/><stop offset=".5" stop-color="#2878f4"/><stop offset="1" stop-color="#70d0ff"/></linearGradient></defs><path d="M1.4 2.2H8.5L13 24L10.2 28.6L5.4 24.6H1.4Z" fill="#c4c4c4" stroke="#5a5a5a" stroke-width=".5"/><path d="M1 .2V24.9" stroke="#111" stroke-width="1.5" stroke-dasharray="1.7 .8"/><path d="M1.3 .2V24.9" stroke="#111" stroke-width=".7"/><path d="M1.6 8.6H5.2V7.4H7.4V9.2Q8.8 10.2 7.4 11.4H5.2V10.4H1.6ZM1.6 15.6H5.2V14.8H7.4V16.4Q8.8 17.4 7.4 18.6H5.2V17.4H1.6Z" fill="#f2f2f2" stroke="#6a6a6a" stroke-width=".45"/><path d="M19.5 6.6H23.5L27 9.6H30.6V31.5H19.5Z" fill="#c4c4c4" stroke="#5a5a5a" stroke-width=".5"/><path d="M31 7.3V31.9" stroke="#111" stroke-width="1.5" stroke-dasharray="1.7 .8"/><path d="M30.7 7.3V31.9" stroke="#111" stroke-width=".7"/><path d="M19.5 31.3H31" stroke="#111" stroke-width="1"/><path d="M30.4 12.6H26.8V11.4H24.6V13.2Q23.2 14.2 24.6 15.4H26.8V14.4H30.4ZM30.4 19.6H26.8V18.8H24.6V20.4Q23.2 21.4 24.6 22.6H26.8V21.4H30.4Z" fill="#f2f2f2" stroke="#6a6a6a" stroke-width=".45"/><path d="M3.3 .8H18.8C22 5.2 20 15 30.2 21.8L21 31.4H15.4C9.4 24 12.8 9 3.3 .8Z" fill="#1010b0" stroke="#1010b0" stroke-width=".9" stroke-linejoin="round"/><path d="M6.5 2.0L7.5 3.1L8.3 4.3L9.0 5.5L9.6 6.8L10.1 8.1L10.6 9.5L19.3 6.7L19.0 5.7L18.8 4.8L18.5 3.9L18.1 3.1L17.8 2.3L17.3 1.6Z" fill="url(#fgg)"/><path d="M11.2 11.4L11.5 12.8L11.8 14.2L12.1 15.6L12.4 17.0L12.7 18.4L13.0 19.8L21.5 14.4L21.1 13.3L20.7 12.2L20.4 11.2L20.1 10.1L19.9 9.1L19.6 8.1Z" fill="url(#fgg)"/><path d="M13.4 21.7L13.8 23.2L14.2 24.5L14.7 25.9L15.3 27.1L16.0 28.4L16.8 29.5L27.4 22.4L26.3 21.4L25.2 20.4L24.3 19.3L23.5 18.2L22.8 17.0L22.2 15.9Z" fill="url(#fgg)"/></svg>
<svg style="left:1427px;top:53px" width="32" height="32" viewBox="0 0 32 32" ><defs><linearGradient id="fgh" x1="0" y1="0" x2="1" y2="1"><stop offset="0" stop-color="#ffff70"/><stop offset=".5" stop-color="#f8f028"/><stop offset="1" stop-color="#ffff80"/></linearGradient></defs><path d="M1.4 2.2H8.5L13 24L10.2 28.6L5.4 24.6H1.4Z" fill="#c4c4c4" stroke="#5a5a5a" stroke-width=".5"/><path d="M1 .2V24.9" stroke="#111" stroke-width="1.5" stroke-dasharray="1.7 .8"/><path d="M1.3 .2V24.9" stroke="#111" stroke-width=".7"/><path d="M1.6 8.6H5.2V7.4H7.4V9.2Q8.8 10.2 7.4 11.4H5.2V10.4H1.6ZM1.6 15.6H5.2V14.8H7.4V16.4Q8.8 17.4 7.4 18.6H5.2V17.4H1.6Z" fill="#f2f2f2" stroke="#6a6a6a" stroke-width=".45"/><path d="M19.5 6.6H23.5L27 9.6H30.6V31.5H19.5Z" fill="#c4c4c4" stroke="#5a5a5a" stroke-width=".5"/><path d="M31 7.3V31.9" stroke="#111" stroke-width="1.5" stroke-dasharray="1.7 .8"/><path d="M30.7 7.3V31.9" stroke="#111" stroke-width=".7"/><path d="M19.5 31.3H31" stroke="#111" stroke-width="1"/><path d="M30.4 12.6H26.8V11.4H24.6V13.2Q23.2 14.2 24.6 15.4H26.8V14.4H30.4ZM30.4 19.6H26.8V18.8H24.6V20.4Q23.2 21.4 24.6 22.6H26.8V21.4H30.4Z" fill="#f2f2f2" stroke="#6a6a6a" stroke-width=".45"/><path d="M3.3 .8H18.8C22 5.2 20 15 30.2 21.8L21 31.4H15.4C9.4 24 12.8 9 3.3 .8Z" fill="#8a8000" stroke="#8a8000" stroke-width=".9" stroke-linejoin="round"/><path d="M6.5 2.0L7.5 3.1L8.3 4.3L9.0 5.5L9.6 6.8L10.1 8.1L10.6 9.5L19.3 6.7L19.0 5.7L18.8 4.8L18.5 3.9L18.1 3.1L17.8 2.3L17.3 1.6Z" fill="url(#fgh)"/><path d="M11.2 11.4L11.5 12.8L11.8 14.2L12.1 15.6L12.4 17.0L12.7 18.4L13.0 19.8L21.5 14.4L21.1 13.3L20.7 12.2L20.4 11.2L20.1 10.1L19.9 9.1L19.6 8.1Z" fill="url(#fgh)"/><path d="M13.4 21.7L13.8 23.2L14.2 24.5L14.7 25.9L15.3 27.1L16.0 28.4L16.8 29.5L27.4 22.4L26.3 21.4L25.2 20.4L24.3 19.3L23.5 18.2L22.8 17.0L22.2 15.9Z" fill="url(#fgh)"/></svg>
<svg style="left:1466px;top:53px" width="32" height="32" viewBox="0 0 32 32" ><defs><linearGradient id="fgi" x1="0" y1="0" x2="1" y2="1"><stop offset="0" stop-color="#60f8ff"/><stop offset=".5" stop-color="#28e4f4"/><stop offset="1" stop-color="#80ffff"/></linearGradient></defs><path d="M1.4 2.2H8.5L13 24L10.2 28.6L5.4 24.6H1.4Z" fill="#c4c4c4" stroke="#5a5a5a" stroke-width=".5"/><path d="M1 .2V24.9" stroke="#111" stroke-width="1.5" stroke-dasharray="1.7 .8"/><path d="M1.3 .2V24.9" stroke="#111" stroke-width=".7"/><path d="M1.6 8.6H5.2V7.4H7.4V9.2Q8.8 10.2 7.4 11.4H5.2V10.4H1.6ZM1.6 15.6H5.2V14.8H7.4V16.4Q8.8 17.4 7.4 18.6H5.2V17.4H1.6Z" fill="#f2f2f2" stroke="#6a6a6a" stroke-width=".45"/><path d="M19.5 6.6H23.5L27 9.6H30.6V31.5H19.5Z" fill="#c4c4c4" stroke="#5a5a5a" stroke-width=".5"/><path d="M31 7.3V31.9" stroke="#111" stroke-width="1.5" stroke-dasharray="1.7 .8"/><path d="M30.7 7.3V31.9" stroke="#111" stroke-width=".7"/><path d="M19.5 31.3H31" stroke="#111" stroke-width="1"/><path d="M30.4 12.6H26.8V11.4H24.6V13.2Q23.2 14.2 24.6 15.4H26.8V14.4H30.4ZM30.4 19.6H26.8V18.8H24.6V20.4Q23.2 21.4 24.6 22.6H26.8V21.4H30.4Z" fill="#f2f2f2" stroke="#6a6a6a" stroke-width=".45"/><path d="M3.3 .8H18.8C22 5.2 20 15 30.2 21.8L21 31.4H15.4C9.4 24 12.8 9 3.3 .8Z" fill="#0088a0" stroke="#0088a0" stroke-width=".9" stroke-linejoin="round"/><path d="M6.5 2.0L7.5 3.1L8.3 4.3L9.0 5.5L9.6 6.8L10.1 8.1L10.6 9.5L19.3 6.7L19.0 5.7L18.8 4.8L18.5 3.9L18.1 3.1L17.8 2.3L17.3 1.6Z" fill="url(#fgi)"/><path d="M11.2 11.4L11.5 12.8L11.8 14.2L12.1 15.6L12.4 17.0L12.7 18.4L13.0 19.8L21.5 14.4L21.1 13.3L20.7 12.2L20.4 11.2L20.1 10.1L19.9 9.1L19.6 8.1Z" fill="url(#fgi)"/><path d="M13.4 21.7L13.8 23.2L14.2 24.5L14.7 25.9L15.3 27.1L16.0 28.4L16.8 29.5L27.4 22.4L26.3 21.4L25.2 20.4L24.3 19.3L23.5 18.2L22.8 17.0L22.2 15.9Z" fill="url(#fgi)"/></svg>
<svg style="left:1505px;top:53px" width="32" height="32" viewBox="0 0 32 32" ><defs><linearGradient id="fgj" x1="0" y1="0" x2="1" y2="1"><stop offset="0" stop-color="#d830e8"/><stop offset=".5" stop-color="#b808cc"/><stop offset="1" stop-color="#e040f0"/></linearGradient></defs><path d="M1.4 2.2H8.5L13 24L10.2 28.6L5.4 24.6H1.4Z" fill="#c4c4c4" stroke="#5a5a5a" stroke-width=".5"/><path d="M1 .2V24.9" stroke="#111" stroke-width="1.5" stroke-dasharray="1.7 .8"/><path d="M1.3 .2V24.9" stroke="#111" stroke-width=".7"/><path d="M1.6 8.6H5.2V7.4H7.4V9.2Q8.8 10.2 7.4 11.4H5.2V10.4H1.6ZM1.6 15.6H5.2V14.8H7.4V16.4Q8.8 17.4 7.4 18.6H5.2V17.4H1.6Z" fill="#f2f2f2" stroke="#6a6a6a" stroke-width=".45"/><path d="M19.5 6.6H23.5L27 9.6H30.6V31.5H19.5Z" fill="#c4c4c4" stroke="#5a5a5a" stroke-width=".5"/><path d="M31 7.3V31.9" stroke="#111" stroke-width="1.5" stroke-dasharray="1.7 .8"/><path d="M30.7 7.3V31.9" stroke="#111" stroke-width=".7"/><path d="M19.5 31.3H31" stroke="#111" stroke-width="1"/><path d="M30.4 12.6H26.8V11.4H24.6V13.2Q23.2 14.2 24.6 15.4H26.8V14.4H30.4ZM30.4 19.6H26.8V18.8H24.6V20.4Q23.2 21.4 24.6 22.6H26.8V21.4H30.4Z" fill="#f2f2f2" stroke="#6a6a6a" stroke-width=".45"/><path d="M3.3 .8H18.8C22 5.2 20 15 30.2 21.8L21 31.4H15.4C9.4 24 12.8 9 3.3 .8Z" fill="#5c0070" stroke="#5c0070" stroke-width=".9" stroke-linejoin="round"/><path d="M6.5 2.0L7.5 3.1L8.3 4.3L9.0 5.5L9.6 6.8L10.1 8.1L10.6 9.5L19.3 6.7L19.0 5.7L18.8 4.8L18.5 3.9L18.1 3.1L17.8 2.3L17.3 1.6Z" fill="url(#fgj)"/><path d="M11.2 11.4L11.5 12.8L11.8 14.2L12.1 15.6L12.4 17.0L12.7 18.4L13.0 19.8L21.5 14.4L21.1 13.3L20.7 12.2L20.4 11.2L20.1 10.1L19.9 9.1L19.6 8.1Z" fill="url(#fgj)"/><path d="M13.4 21.7L13.8 23.2L14.2 24.5L14.7 25.9L15.3 27.1L16.0 28.4L16.8 29.5L27.4 22.4L26.3 21.4L25.2 20.4L24.3 19.3L23.5 18.2L22.8 17.0L22.2 15.9Z" fill="url(#fgj)"/></svg>
<svg style="left:1544px;top:53px" width="32" height="32" viewBox="0 0 32 32" ><defs><linearGradient id="fgk" x1="0" y1="0" x2="1" y2="1"><stop offset="0" stop-color="#ff2030"/><stop offset=".5" stop-color="#ff2030"/><stop offset="1" stop-color="#ff2030"/></linearGradient></defs><path d="M1.4 2.2H8.5L13 24L10.2 28.6L5.4 24.6H1.4Z" fill="#c4c4c4" stroke="#5a5a5a" stroke-width=".5"/><path d="M1 .2V24.9" stroke="#111" stroke-width="1.5" stroke-dasharray="1.7 .8"/><path d="M1.3 .2V24.9" stroke="#111" stroke-width=".7"/><path d="M1.6 8.6H5.2V7.4H7.4V9.2Q8.8 10.2 7.4 11.4H5.2V10.4H1.6ZM1.6 15.6H5.2V14.8H7.4V16.4Q8.8 17.4 7.4 18.6H5.2V17.4H1.6Z" fill="#f2f2f2" stroke="#6a6a6a" stroke-width=".45"/><path d="M19.5 6.6H23.5L27 9.6H30.6V31.5H19.5Z" fill="#c4c4c4" stroke="#5a5a5a" stroke-width=".5"/><path d="M31 7.3V31.9" stroke="#111" stroke-width="1.5" stroke-dasharray="1.7 .8"/><path d="M30.7 7.3V31.9" stroke="#111" stroke-width=".7"/><path d="M19.5 31.3H31" stroke="#111" stroke-width="1"/><path d="M30.4 12.6H26.8V11.4H24.6V13.2Q23.2 14.2 24.6 15.4H26.8V14.4H30.4ZM30.4 19.6H26.8V18.8H24.6V20.4Q23.2 21.4 24.6 22.6H26.8V21.4H30.4Z" fill="#f2f2f2" stroke="#6a6a6a" stroke-width=".45"/><path d="M3.3 .8H18.8C22 5.2 20 15 30.2 21.8L21 31.4H15.4C9.4 24 12.8 9 3.3 .8Z" fill="#2a0818" stroke="#2a0818" stroke-width=".9" stroke-linejoin="round"/><path d="M6.5 2.0L7.5 3.1L8.3 4.3L9.0 5.5L9.6 6.8L10.1 8.1L10.6 9.5L19.3 6.7L19.0 5.7L18.8 4.8L18.5 3.9L18.1 3.1L17.8 2.3L17.3 1.6Z" fill="#f81828"/><path d="M11.2 11.4L11.5 12.8L11.8 14.2L12.1 15.6L12.4 17.0L12.7 18.4L13.0 19.8L21.5 14.4L21.1 13.3L20.7 12.2L20.4 11.2L20.1 10.1L19.9 9.1L19.6 8.1Z" fill="#10c83c"/><path d="M13.4 21.7L13.8 23.2L14.2 24.5L14.7 25.9L15.3 27.1L16.0 28.4L16.8 29.5L27.4 22.4L26.3 21.4L25.2 20.4L24.3 19.3L23.5 18.2L22.8 17.0L22.2 15.9Z" fill="#1c8cff"/></svg>
<svg style="left:1256px;top:53px" width="32" height="32" viewBox="0 0 32 32" ><rect width="32" height="32" fill="url(#pu)"/><ellipse cx="16" cy="16" rx="3.2" ry="4.4" fill="#fff" opacity=".9"/><ellipse cx="16" cy="16" rx="1.6" ry="2.4" fill="#e8a0e8"/></svg>
<div style="left:0px;top:90px;width:1901px;height:1px;background:#9a9ca2"></div>
<div style="left:0px;top:91px;width:1901px;height:3px;background:#767676"></div>
<div style="left:0px;top:94px;width:1901px;height:928px;background:linear-gradient(#727272,#b8b8b8)"></div>
<div style="left:0px;top:94px;width:1px;height:945px;background:#a0a0a0"></div>
<div style="left:1px;top:94px;width:1px;height:945px;background:#6e6e6e"></div>
<div style="left:1901px;top:90px;width:19px;height:952px;background:#f0f0f0"></div>
<div style="left:1901px;top:94px;width:8px;height:928px;background:#f4f4f4"></div>
<div class="w" style="left:1901px;top:94px;width:1px;height:929px;"></div>
<div class="w" style="left:2px;top:1022px;width:1900px;height:1px;"></div>
<div style="left:1909px;top:109px;width:2px;height:868px;background:#8c8c8c"></div>
<div style="left:0px;top:1023px;width:1920px;height:19px;background:#f0f0f0"></div>
<div style="left:19px;top:1030px;width:1825px;height:2px;background:#8c8c8c"></div>
<div style="left:0px;top:1023px;width:1px;height:16px;background:#a0a0a0"></div>
<div style="left:1px;top:1023px;width:1px;height:16px;background:#6e6e6e"></div>
<div style="left:2px;top:94px;width:1306px;height:63px;background:#6c6c6c"></div>
<div class="w" style="left:2px;top:94px;width:1304px;height:61px;"></div>
<div class="pnl" style="left:5px;top:97px;width:1300px;height:57px;background:linear-gradient(#727272,#767676)"><div class="hd">View</div><div class="hl"></div><div class="bd"></div></div>
<div style="left:1308px;top:94px;width:312px;height:63px;background:#6c6c6c"></div>
<div class="w" style="left:1308px;top:94px;width:310px;height:61px;"></div>
<div class="pnl" style="left:1311px;top:97px;width:306px;height:57px;background:linear-gradient(#727272,#767676)"><div class="hd">Sensor</div><div class="hl"></div><div class="bd"></div></div>
<div style="left:1620px;top:94px;width:124px;height:63px;background:#6c6c6c"></div>
<div class="w" style="left:1620px;top:94px;width:122px;height:61px;"></div>
<div class="pnl" style="left:1622px;top:97px;width:119px;height:57px;background:linear-gradient(#727272,#767676)"><div class="hd">Generator</div><div class="hl"></div><div class="bd"></div></div>
<div style="left:1744px;top:94px;width:154px;height:63px;background:#6c6c6c"></div>
<div class="w" style="left:1744px;top:94px;width:152px;height:61px;"></div>
<div class="pnl" style="left:1746px;top:97px;width:149px;height:57px;background:linear-gradient(#727272,#767676)"><div class="hd">Parameters</div><div class="hl"></div><div class="bd"></div></div>
<div style="left:2px;top:159px;width:1810px;height:223px;background:#6c6c6c"></div>
<div class="w" style="left:2px;top:159px;width:1808px;height:221px;"></div>
<div class="pnl" style="left:5px;top:162px;width:1804px;height:217px;background:linear-gradient(#777777,#878787)"><div class="hd"><span class="t" style="position:relative;top:-.6px;margin-left:2px;font-size:9.5px;letter-spacing:-.34px" id="avg">( Average dE: 7.02 [1.83,6.34,1.03] max: 10.59 [CIE2000] )</span></div><div class="hl"></div><div class="bd"></div></div>
<div style="left:1812px;top:159px;width:86px;height:105px;background:#6c6c6c"></div>
<div class="w" style="left:1812px;top:159px;width:84px;height:103px;"></div>
<div class="pnl" style="left:1815px;top:162px;width:80px;height:99px;background:linear-gradient(#777777,#7f7f7f)"><div class="hd">Display</div><div class="hl"></div><div class="bd"></div></div>
<div style="left:2px;top:384px;width:384px;height:635px;background:#6c6c6c"></div>
<div class="w" style="left:2px;top:384px;width:382px;height:633px;"></div>
<div class="pnl" style="left:5px;top:387px;width:378px;height:629px;background:linear-gradient(#888888,#b7b7b7)"><div class="hd">Selected color</div><div class="hl"></div><div class="bd"></div></div>
<div style="left:388px;top:384px;width:1510px;height:635px;background:#6c6c6c"></div>
<div class="w" style="left:388px;top:384px;width:1508px;height:633px;"></div>
<div class="pnl" style="left:391px;top:387px;width:1504px;height:629px;background:linear-gradient(#888888,#b7b7b7)"><div class="hd">Information</div><div class="hl"></div><div class="bd"></div></div>
<div style="left:6px;top:121px;width:201px;height:22px;background:#fafafa"></div>
<div style="left:9px;top:123px;width:200px;height:22px;background:#fff;border:1px solid #bcbcbc"></div>
<div class="t vd" style="left:12.5px;top:129px;font-size:12px;letter-spacing:.31px" id="cb1">Blue saturation scale</div>
<svg style="left:194px;top:129px" width="12" height="10" viewBox="0 0 12 10" ><path d="M1.5 2.5L6 7.5L10.5 2.5" fill="none" stroke="#444" stroke-width="1.1"/></svg>
<div style="left:216px;top:118px;width:1056px;height:28px;background:#f0f0f0;border:1px solid #d0d0d0;border-right-color:#fafafa;border-bottom-color:#fafafa"></div>
<div class="t" style="left:217px;top:119.6px;font:bold 16px 'Liberation Sans',sans-serif;letter-spacing:.02px" id="cs">Color Space: HDTV Rec709 , White Point: D65, EOTF:&nbsp; SDR, Power law (black compensation) w/gamma = 2.20, # of measures: 0 [19:46:30]</div>
<div style="left:1279px;top:121px;width:15px;height:11px;background:#f4f4f4;border:1px solid #b8b8b8"></div>
<div style="left:1279px;top:133px;width:15px;height:11px;background:#f4f4f4;border:1px solid #b8b8b8"></div>
<svg style="left:1279px;top:121px" width="15" height="23" viewBox="0 0 15 23" ><path d="M4.8 7.2L7.5 4.2L10.2 7.2Z M4.8 16L7.5 19L10.2 16Z" fill="#000"/></svg>
<div class="lb" style="left:1315px;top:117px;width:225px;height:15px;background:#eeeeee;padding-left:1px">Simulated sensor</div>
<div class="lb" style="left:1317px;top:134px;width:66px;height:14px;padding-left:1px">Adaptive</div>
<svg style="left:1423px;top:135px" width="14" height="13" viewBox="0 0 14 13" ><path d="M1 .8L13 6.6L1 12.4Z" fill="#8fd24a" stroke="#9aa89a" stroke-width=".8"/></svg>
<svg style="left:1587px;top:132px" width="18" height="18" viewBox="0 0 18 18" ><path d="M2 3.5L11 1.5L12 14L3.5 16.5Z" fill="#dfeaff" stroke="#2a58c8" stroke-width="1.6" stroke-linejoin="round"/><path d="M5 9L7 11.5L9.5 7" fill="none" stroke="#e8b830" stroke-width="1.3"/><path d="M9 11L15 6.5" stroke="#3a6ad8" stroke-width="1.6"/><circle cx="15.8" cy="5.8" r="1.1" fill="#e04020"/></svg>
<svg style="left:1717px;top:134px" width="18" height="18" viewBox="0 0 18 18" ><path d="M2 3.5L11 1.5L12 14L3.5 16.5Z" fill="#dfeaff" stroke="#2a58c8" stroke-width="1.6" stroke-linejoin="round"/><path d="M5 9L7 11.5L9.5 7" fill="none" stroke="#e8b830" stroke-width="1.3"/><path d="M9 11L15 6.5" stroke="#3a6ad8" stroke-width="1.6"/><circle cx="15.8" cy="5.8" r="1.1" fill="#e04020"/></svg>
<div class="lb" style="left:1623px;top:117px;width:76px;height:15px;background:#eeeeee;padding-left:1px">DVD manual</div>
<div style="left:1752px;top:118px;width:132px;height:16px;background:#f0f0f0"></div>
<div style="left:1752px;top:136px;width:132px;height:15px;background:#f0f0f0"></div>
<div class="cb" style="left:1754px;top:119.5px;width:12.5px;height:12.5px"></div>
<div class="t vd" style="left:1771px;top:120px;font-size:12.5px;letter-spacing:-.1px">Reference</div>
<div class="cb" style="left:1754px;top:137px;border-color:#cfcfcf;background:#f8f8f8"></div>
<div class="t vd" style="left:1771px;top:137.5px;font-size:12.5px;letter-spacing:-.18px;color:#8a8a8a">XYZ Adjustment</div>
<svg style="left:5px;top:162px" width="1805" height="217" viewBox="0 0 1805 217" ><path d="M1.5 17V214.5H1802.5V6.5Q1802.5 1.5 1797 1.5" fill="none" stroke="#e60000" stroke-width="1.2"/><path d="M1785 17.5H1802.5" stroke="#e60000" stroke-width="1.1"/><rect x="4.8" y="1" width="1.2" height="1.2" fill="#e60000"/><rect x="1" y="4.8" width="1.2" height="1.2" fill="#e60000"/></svg>
<div style="left:8px;top:176px;width:1782px;height:199px;background:#f0f0f0;border-top:2px solid #7a7a7a;border-left:2px solid #7a7a7a;border-right:2px solid #fff;border-bottom:2px solid #fff"></div>
<div class="gh" style="left:10px;top:178px;width:54px;height:22px;line-height:24px">% Sat</div>
<div class="gh" style="left:65px;top:178px;width:340px;height:22px;line-height:24px;background:#f0f0f0">0</div>
<div class="gh" style="left:406px;top:179px;width:341px;height:21px;line-height:22px;background:#bebeee">25</div>
<div class="gh" style="left:748px;top:179px;width:340px;height:21px;line-height:22px;background:#8e8eef">50</div>
<div class="gh" style="left:1089px;top:179px;width:341px;height:21px;line-height:22px;background:#5e5eee">75</div>
<div class="gh" style="left:1431px;top:179px;width:340px;height:21px;line-height:22px;background:#2e2eec">100</div>
<div style="left:10px;top:200px;width:1762px;height:1px;background:#585858"></div>
<div class="gh" style="left:10px;top:201px;width:54px;height:24px;line-height:25px">x</div>
<div style="left:10px;top:225px;width:54px;height:1px;background:#585858"></div>
<div style="left:65px;top:201px;width:1706px;height:24px;background:#fff"></div>
<div style="left:65px;top:225px;width:1706px;height:1px;background:#c2c2c2"></div>
<div class="gc" style="left:65px;top:201px;width:338.8px;height:24px;line-height:25px;transform:scaleX(.84)">0.2738</div>
<div class="gc" style="left:406px;top:201px;width:339.8px;height:24px;line-height:25px;transform:scaleX(.84)">0.2376</div>
<div class="gc" style="left:748px;top:201px;width:338.8px;height:24px;line-height:25px;transform:scaleX(.84)">0.2060</div>
<div class="gc" style="left:1089px;top:201px;width:339.8px;height:24px;line-height:25px;transform:scaleX(.84)">0.1757</div>
<div class="gc" style="left:1431px;top:201px;width:338.8px;height:24px;line-height:25px;transform:scaleX(.84)">0.1569</div>
<div class="gh" style="left:10px;top:226px;width:54px;height:24px;line-height:25px">y</div>
<div style="left:10px;top:250px;width:54px;height:1px;background:#585858"></div>
<div style="left:65px;top:226px;width:1706px;height:24px;background:#fff"></div>
<div style="left:65px;top:250px;width:1706px;height:1px;background:#c2c2c2"></div>
<div class="gc" style="left:65px;top:226px;width:338.8px;height:24px;line-height:25px;transform:scaleX(.84)">0.2733</div>
<div class="gc" style="left:406px;top:226px;width:339.8px;height:24px;line-height:25px;transform:scaleX(.84)">0.2091</div>
<div class="gc" style="left:748px;top:226px;width:338.8px;height:24px;line-height:25px;transform:scaleX(.84)">0.1532</div>
<div class="gc" style="left:1089px;top:226px;width:339.8px;height:24px;line-height:25px;transform:scaleX(.84)">0.1012</div>
<div class="gc" style="left:1431px;top:226px;width:338.8px;height:24px;line-height:25px;transform:scaleX(.84)">0.0614</div>
<div class="gh" style="left:10px;top:251px;width:54px;height:24px;line-height:25px">Y</div>
<div style="left:10px;top:275px;width:54px;height:1px;background:#585858"></div>
<div style="left:65px;top:251px;width:1706px;height:24px;background:#fff"></div>
<div style="left:65px;top:275px;width:1706px;height:1px;background:#c2c2c2"></div>
<div class="gc" style="left:65px;top:251px;width:338.8px;height:24px;line-height:25px;transform:scaleX(.84)">11.947</div>
<div class="gc" style="left:406px;top:251px;width:339.8px;height:24px;line-height:25px;transform:scaleX(.84)">12.179</div>
<div class="gc" style="left:748px;top:251px;width:338.8px;height:24px;line-height:25px;transform:scaleX(.84)">12.151</div>
<div class="gc" style="left:1089px;top:251px;width:339.8px;height:24px;line-height:25px;transform:scaleX(.84)">12.947</div>
<div class="gc" style="left:1431px;top:251px;width:338.8px;height:24px;line-height:25px;transform:scaleX(.84)">17.341</div>
<div class="gh" style="left:10px;top:276px;width:54px;height:24px;line-height:25px">Delta E</div>
<div style="left:10px;top:300px;width:54px;height:1px;background:#585858"></div>
<div style="left:65px;top:276px;width:1706px;height:24px;background:#ffb0b0"></div>
<div style="left:65px;top:300px;width:1706px;height:1px;background:#c2c2c2"></div>
<div class="gc" style="left:65px;top:276px;width:338.8px;height:24px;line-height:25px;font-weight:bold;font-size:13.5px;transform:scaleX(.84)">10.6</div>
<div class="gc" style="left:406px;top:276px;width:339.8px;height:24px;line-height:25px;font-weight:bold;font-size:13.5px;transform:scaleX(.84)">7.6</div>
<div class="gc" style="left:748px;top:276px;width:338.8px;height:24px;line-height:25px;font-weight:bold;font-size:13.5px;transform:scaleX(.84)">5.4</div>
<div class="gc" style="left:1089px;top:276px;width:339.8px;height:24px;line-height:25px;font-weight:bold;font-size:13.5px;transform:scaleX(.84)">4.9</div>
<div class="gc" style="left:1431px;top:276px;width:338.8px;height:24px;line-height:25px;font-weight:bold;font-size:13.5px;transform:scaleX(.84)">6.6</div>
<div class="gh" style="left:10px;top:301px;width:54px;height:24px;line-height:25px">delta xy</div>
<div style="left:10px;top:325px;width:54px;height:1px;background:#585858"></div>
<div style="left:65px;top:301px;width:1706px;height:24px;background:#f0f0f0"></div>
<div style="left:65px;top:325px;width:1706px;height:1px;background:#c2c2c2"></div>
<div class="gc" style="left:65px;top:301px;width:338.8px;height:24px;line-height:25px;transform:scaleX(.84)">0.0680</div>
<div class="gc" style="left:406px;top:301px;width:339.8px;height:24px;line-height:25px;transform:scaleX(.84)">0.0623</div>
<div class="gc" style="left:748px;top:301px;width:338.8px;height:24px;line-height:25px;transform:scaleX(.84)">0.0483</div>
<div class="gc" style="left:1089px;top:301px;width:339.8px;height:24px;line-height:25px;transform:scaleX(.84)">0.0312</div>
<div class="gc" style="left:1431px;top:301px;width:338.8px;height:24px;line-height:25px;transform:scaleX(.84)">0.0071</div>
<div class="gh" style="left:10px;top:326px;width:54px;height:24px;line-height:25px">delta L</div>
<div style="left:10px;top:350px;width:54px;height:1px;background:#585858"></div>
<div style="left:65px;top:326px;width:1706px;height:24px;background:#e0e0e0"></div>
<div style="left:65px;top:350px;width:1706px;height:1px;background:#c2c2c2"></div>
<div class="gc" style="left:65px;top:326px;width:338.8px;height:24px;line-height:25px;transform:scaleX(.84)">+2.6 %</div>
<div class="gc" style="left:406px;top:326px;width:339.8px;height:24px;line-height:25px;transform:scaleX(.84)">+5.3 %</div>
<div class="gc" style="left:748px;top:326px;width:338.8px;height:24px;line-height:25px;transform:scaleX(.84)">+4.6 %</div>
<div class="gc" style="left:1089px;top:326px;width:339.8px;height:24px;line-height:25px;transform:scaleX(.84)">+11.7 %</div>
<div class="gc" style="left:1431px;top:326px;width:338.8px;height:24px;line-height:25px;transform:scaleX(.84)">+52.3 %</div>
<div style="left:10px;top:351px;width:54px;height:4px;background:#f0f0f0"></div>
<div style="left:64px;top:178px;width:1px;height:177px;background:#585858"></div>
<div style="left:405px;top:178px;width:1px;height:23px;background:#585858"></div>
<div style="left:405px;top:201px;width:1px;height:154px;background:#c2c2c2"></div>
<div style="left:747px;top:178px;width:1px;height:23px;background:#585858"></div>
<div style="left:747px;top:201px;width:1px;height:154px;background:#c2c2c2"></div>
<div style="left:1088px;top:178px;width:1px;height:23px;background:#585858"></div>
<div style="left:1088px;top:201px;width:1px;height:154px;background:#c2c2c2"></div>
<div style="left:1430px;top:178px;width:1px;height:23px;background:#585858"></div>
<div style="left:1430px;top:201px;width:1px;height:154px;background:#c2c2c2"></div>
<div style="left:1771px;top:178px;width:1px;height:23px;background:#585858"></div>
<div style="left:1771px;top:201px;width:1px;height:154px;background:#c2c2c2"></div>
<div style="left:1772px;top:178px;width:17px;height:177px;background:#f0f0f0"></div>
<div style="left:1779px;top:195px;width:2px;height:141px;background:#8c8c8c"></div>
<div style="left:10px;top:355px;width:1778px;height:18px;background:#f0f0f0"></div>
<svg style="left:14px;top:359px" width="8" height="11" viewBox="0 0 8 11" ><path d="M7 .8V10.2L.8 5.5Z" fill="#a6a6a6"/></svg>
<svg style="left:1759px;top:359px" width="8" height="11" viewBox="0 0 8 11" ><path d="M1 .8V10.2L7.2 5.5Z" fill="#a6a6a6"/></svg>
<div style="left:1822px;top:181px;width:66px;height:14px;background:#f0f0f0"></div>
<div class="rb" style="left:1822px;top:182px;border-color:#c8c8c8;background:#f8f8f8"></div>
<div class="t vd" style="left:1839px;top:182.5px;font-size:12.5px;color:#8a8a8a">Sensor</div>
<div style="left:1822px;top:197px;width:66px;height:14px;background:#f0f0f0"></div>
<div class="rb" style="left:1822px;top:198px"></div>
<div class="t vd" style="left:1839px;top:198.5px;font-size:12.5px">RGB</div>
<div style="left:1822px;top:212px;width:66px;height:14px;background:#f0f0f0"></div>
<div class="rb" style="left:1822px;top:213px"></div>
<div class="t vd" style="left:1839px;top:213.5px;font-size:12.5px">XYZ</div>
<div style="left:1822px;top:228px;width:66px;height:14px;background:#f0f0f0"></div>
<div class="rb" style="left:1822px;top:229px"></div>
<div class="t vd" style="left:1839px;top:229.5px;font-size:12.5px">xyz</div>
<div style="left:1822px;top:244px;width:66px;height:14px;background:#f0f0f0"></div>
<div class="rb" style="left:1822px;top:245px;border:3.5px solid #0b5cb0;background:#fff"></div>
<div class="t vd" style="left:1839px;top:245.5px;font-size:12.5px">xyY</div>
<div style="left:1812px;top:264px;width:84px;height:30px;background:#ececec;border-top:1px solid #fff;border-left:1px solid #fff;border-right:1px solid #a8a8a8;border-bottom:1px solid #a8a8a8"></div>
<div style="left:1812px;top:294px;width:84px;height:30px;background:#ececec;border-top:1px solid #fff;border-left:1px solid #fff;border-right:1px solid #a8a8a8;border-bottom:1px solid #a8a8a8"></div>
<div style="left:1812px;top:324px;width:84px;height:30px;background:#ececec;border-top:1px solid #fff;border-left:1px solid #fff;border-right:1px solid #a8a8a8;border-bottom:1px solid #a8a8a8"></div>
<svg style="left:1818px;top:266px" width="32" height="28" viewBox="0 0 32 28" ><defs><linearGradient id="fggo" x1="0" y1="0" x2="1" y2="1"><stop offset="0" stop-color="#60b0ff"/><stop offset=".5" stop-color="#2068f0"/><stop offset="1" stop-color="#50c0ff"/></linearGradient></defs><path d="M1.4 2.2H8.5L13 24L10.2 28.6L5.4 24.6H1.4Z" fill="#c4c4c4" stroke="#5a5a5a" stroke-width=".5"/><path d="M1 .2V24.9" stroke="#111" stroke-width="1.5" stroke-dasharray="1.7 .8"/><path d="M1.3 .2V24.9" stroke="#111" stroke-width=".7"/><path d="M1.6 8.6H5.2V7.4H7.4V9.2Q8.8 10.2 7.4 11.4H5.2V10.4H1.6ZM1.6 15.6H5.2V14.8H7.4V16.4Q8.8 17.4 7.4 18.6H5.2V17.4H1.6Z" fill="#f2f2f2" stroke="#6a6a6a" stroke-width=".45"/><path d="M19.5 6.6H23.5L27 9.6H30.6V31.5H19.5Z" fill="#c4c4c4" stroke="#5a5a5a" stroke-width=".5"/><path d="M31 7.3V31.9" stroke="#111" stroke-width="1.5" stroke-dasharray="1.7 .8"/><path d="M30.7 7.3V31.9" stroke="#111" stroke-width=".7"/><path d="M19.5 31.3H31" stroke="#111" stroke-width="1"/><path d="M30.4 12.6H26.8V11.4H24.6V13.2Q23.2 14.2 24.6 15.4H26.8V14.4H30.4ZM30.4 19.6H26.8V18.8H24.6V20.4Q23.2 21.4 24.6 22.6H26.8V21.4H30.4Z" fill="#f2f2f2" stroke="#6a6a6a" stroke-width=".45"/><path d="M3.3 .8H18.8C22 5.2 20 15 30.2 21.8L21 31.4H15.4C9.4 24 12.8 9 3.3 .8Z" fill="#1010a8" stroke="#1010a8" stroke-width=".9" stroke-linejoin="round"/><path d="M6.5 2.0L7.5 3.1L8.3 4.3L9.0 5.5L9.6 6.8L10.1 8.1L10.6 9.5L19.3 6.7L19.0 5.7L18.8 4.8L18.5 3.9L18.1 3.1L17.8 2.3L17.3 1.6Z" fill="url(#fggo)"/><path d="M11.2 11.4L11.5 12.8L11.8 14.2L12.1 15.6L12.4 17.0L12.7 18.4L13.0 19.8L21.5 14.4L21.1 13.3L20.7 12.2L20.4 11.2L20.1 10.1L19.9 9.1L19.6 8.1Z" fill="url(#fggo)"/><path d="M13.4 21.7L13.8 23.2L14.2 24.5L14.7 25.9L15.3 27.1L16.0 28.4L16.8 29.5L27.4 22.4L26.3 21.4L25.2 20.4L24.3 19.3L23.5 18.2L22.8 17.0L22.2 15.9Z" fill="url(#fggo)"/></svg>
<div class="t vd" style="left:1863px;top:275px;font-size:12.5px">Go</div>
<svg style="left:1818px;top:295px" width="31" height="28" viewBox="0 0 31 28" ><path d="M2.5 4.5C10 1.5 22 .8 28.5 1.5L27 23.5C20 27.5 11 27.5 7 25.5Z" fill="url(#bin)" stroke="#9cc8e8" stroke-width=".8"/><ellipse cx="15.5" cy="22.5" rx="9.5" ry="3.2" fill="#d8f0ff" opacity=".8"/><path d="M15 9.5C18 6.5 22 7 23.5 9.5L25 8V13H20L21.8 11.3C20.6 9.6 18 9.6 16.8 11.2ZM24 16C21.5 19.5 17.5 19.5 15.5 17L14 18.5V13.5H19L17.2 15.2C18.4 16.8 21 16.6 22.2 14.8Z" fill="#18a028"/></svg>
<div class="t vd" style="left:1851px;top:304px;font-size:12.5px">Delete</div>
<svg style="left:1817px;top:328px" width="34" height="24" viewBox="0 0 34 24" ><path d="M0 24V12L2 10L4 7L6 3L8 6L10 9L12 11L14 8L16 4L18 1L20 3L22 6L24 10L26 11L28 9L30 10L32 12V24Z" fill="#ffff00"/><rect x="0" y="12.5" width="2" height="11.5" fill="#000080"/><rect x="2" y="10.5" width="2" height="13.5" fill="#ff00ff"/><rect x="4" y="6" width="5" height="18" fill="#0000ff"/><rect x="9" y="10" width="3" height="14" fill="#00ffff"/><rect x="12" y="11" width="4" height="13" fill="#00ff00"/><rect x="16" y="3" width="5" height="21" fill="#ffff00"/><rect x="21" y="6" width="4" height="18" fill="#800000"/><rect x="25" y="11.5" width="7" height="12.5" fill="#ff0000"/></svg>
<div class="t vd" style="left:1858px;top:334px;font-size:12.5px">Refs</div>
<div class="cb" style="left:1818px;top:361px;border-color:#e0e0e0"></div>
<div class="t vd" style="left:1835px;top:361.5px;font-size:12.5px">Edit</div>
<div class="lb" style="left:17px;top:409px;width:111px;height:14px;padding-left:1px">RGB Levels</div>
<div class="lb" style="left:230px;top:407px;width:128px;height:14px;text-align:center">Current Measure</div>
<div style="left:14px;top:433px;width:200px;height:86px;background:#f0f0f0"></div>
<div style="left:14px;top:477px;width:200px;height:1px;background:repeating-linear-gradient(90deg,#8a8a8a 0 3px,transparent 3px 6px)"></div>
<svg style="left:14px;top:505px" width="200" height="14" viewBox="0 0 200 14" ><rect x="0" y="9" width="200" height="5" fill="#000"/><path d="M1.0 9.5Q24.5 -1.5 48.0 9.5Z" fill="#b00000" stroke="#000" stroke-width="1"/><path d="M51.6 9.5Q75.1 -1.5 98.6 9.5Z" fill="#00a000" stroke="#000" stroke-width="1"/><path d="M102.2 9.5Q125.69999999999999 -1.5 149.2 9.5Z" fill="#0000a8" stroke="#000" stroke-width="1"/><path d="M152.8 9.5Q176.3 -1.5 199.8 9.5Z" fill="#c08810" stroke="#000" stroke-width="1"/></svg>
<div class="t" style="left:9px;top:495px;width:60px;text-align:center;font:bold 12px 'Liberation Serif',serif;color:#101030">0.0%</div>
<div class="t" style="left:60px;top:495px;width:60px;text-align:center;font:bold 12px 'Liberation Serif',serif;color:#101030">0.0%</div>
<div class="t" style="left:111px;top:495px;width:60px;text-align:center;font:bold 12px 'Liberation Serif',serif;color:#101030">0.0%</div>
<div class="t" style="left:162px;top:495px;width:60px;text-align:center;font:bold 12px 'Liberation Serif',serif;color:#101030">dE 0.0</div>
<div style="left:16px;top:533px;width:192px;height:73px;background:#f0f0f0"></div>
<div class="t" style="left:35px;top:534px;font:bold 13px 'Liberation Sans',sans-serif;letter-spacing:.45px">Measure</div>
<div class="t" style="left:127px;top:534px;font:bold 13px 'Liberation Sans',sans-serif;letter-spacing:.45px">Reference</div>
<div class="lb" style="left:17px;top:622px;width:43px;height:14px;padding-left:1px">Target</div>
<div style="left:50px;top:638px;width:116px;height:89px;border:1px solid #000;background:conic-gradient(from 0deg at 50% 50%,#40ff00 0deg,#ffc400 52deg,#ff2000 80deg,#ff0000 95deg,#ff0090 128deg,#a000b8 180deg,#2000ff 225deg,#0000ff 235deg,#0078b8 270deg,#00ff80 308deg,#40ff00 360deg)"></div>
<svg style="left:50px;top:638px" width="116" height="89" viewBox="0 0 116 89" ><rect x="17.5" y="13.5" width="81" height="62" rx="8" fill="#000" stroke="#fff" stroke-width="1"/><path d="M15 44.5H102M58.5 13V76" stroke="#fff" stroke-width="1" stroke-dasharray="3 2" fill="none"/><ellipse cx="58.5" cy="44.5" rx="21" ry="15.5" fill="none" stroke="#fff" stroke-width="1" stroke-dasharray="3 3"/></svg>
<div style="left:220px;top:430px;width:153px;height:577px;background:#f0f0f0;border-top:2px solid #7a7a7a;border-left:2px solid #7a7a7a;border-right:1px solid #fff;border-bottom:1px solid #fff"></div>
<div class="gh" style="left:222px;top:432px;width:53px;height:22px;line-height:24px">Y cd/m<sup style="font-size:8px;line-height:0;vertical-align:4px">2</sup></div>
<div style="left:222px;top:454px;width:53px;height:1px;background:#585858"></div>
<div style="left:276px;top:432px;width:79px;height:22px;background:#fff"></div>
<div style="left:276px;top:454px;width:79px;height:1px;background:#c2c2c2"></div>
<div class="gh" style="left:222px;top:455px;width:53px;height:22px;line-height:24px">Y ftL</div>
<div style="left:222px;top:477px;width:53px;height:1px;background:#585858"></div>
<div style="left:276px;top:455px;width:79px;height:22px;background:#fff"></div>
<div style="left:276px;top:477px;width:79px;height:1px;background:#c2c2c2"></div>
<div class="gh" style="left:222px;top:478px;width:53px;height:22px;line-height:24px">T°</div>
<div style="left:222px;top:500px;width:53px;height:1px;background:#585858"></div>
<div style="left:276px;top:478px;width:79px;height:22px;background:#fff"></div>
<div style="left:276px;top:500px;width:79px;height:1px;background:#c2c2c2"></div>
<div class="gh" style="left:222px;top:501px;width:53px;height:22px;line-height:24px">X</div>
<div style="left:222px;top:523px;width:53px;height:1px;background:#585858"></div>
<div style="left:276px;top:501px;width:79px;height:22px;background:#e0e0e0"></div>
<div style="left:276px;top:523px;width:79px;height:1px;background:#c2c2c2"></div>
<div class="gh" style="left:222px;top:524px;width:53px;height:22px;line-height:24px">Y</div>
<div style="left:222px;top:546px;width:53px;height:1px;background:#585858"></div>
<div style="left:276px;top:524px;width:79px;height:22px;background:#e0e0e0"></div>
<div style="left:276px;top:546px;width:79px;height:1px;background:#c2c2c2"></div>
<div class="gh" style="left:222px;top:547px;width:53px;height:22px;line-height:24px">Z</div>
<div style="left:222px;top:569px;width:53px;height:1px;background:#585858"></div>
<div style="left:276px;top:547px;width:79px;height:22px;background:#e0e0e0"></div>
<div style="left:276px;top:569px;width:79px;height:1px;background:#c2c2c2"></div>
<div class="gh" style="left:222px;top:570px;width:53px;height:22px;line-height:24px">R</div>
<div style="left:222px;top:592px;width:53px;height:1px;background:#585858"></div>
<div style="left:276px;top:570px;width:79px;height:22px;background:#fff"></div>
<div style="left:276px;top:592px;width:79px;height:1px;background:#c2c2c2"></div>
<div class="gh" style="left:222px;top:593px;width:53px;height:22px;line-height:24px">G</div>
<div style="left:222px;top:615px;width:53px;height:1px;background:#585858"></div>
<div style="left:276px;top:593px;width:79px;height:22px;background:#fff"></div>
<div style="left:276px;top:615px;width:79px;height:1px;background:#c2c2c2"></div>
<div class="gh" style="left:222px;top:616px;width:53px;height:22px;line-height:24px">B</div>
<div style="left:222px;top:638px;width:53px;height:1px;background:#585858"></div>
<div style="left:276px;top:616px;width:79px;height:22px;background:#fff"></div>
<div style="left:276px;top:638px;width:79px;height:1px;background:#c2c2c2"></div>
<div class="gh" style="left:222px;top:639px;width:53px;height:22px;line-height:24px">x</div>
<div style="left:222px;top:661px;width:53px;height:1px;background:#585858"></div>
<div style="left:276px;top:639px;width:79px;height:22px;background:#e0e0e0"></div>
<div style="left:276px;top:661px;width:79px;height:1px;background:#c2c2c2"></div>
<div class="gh" style="left:222px;top:662px;width:53px;height:22px;line-height:24px">y</div>
<div style="left:222px;top:684px;width:53px;height:1px;background:#585858"></div>
<div style="left:276px;top:662px;width:79px;height:22px;background:#e0e0e0"></div>
<div style="left:276px;top:684px;width:79px;height:1px;background:#c2c2c2"></div>
<div class="gh" style="left:222px;top:685px;width:53px;height:22px;line-height:24px">Y</div>
<div style="left:222px;top:707px;width:53px;height:1px;background:#585858"></div>
<div style="left:276px;top:685px;width:79px;height:22px;background:#e0e0e0"></div>
<div style="left:276px;top:707px;width:79px;height:1px;background:#c2c2c2"></div>
<div class="gh" style="left:222px;top:708px;width:53px;height:22px;line-height:24px">x</div>
<div style="left:222px;top:730px;width:53px;height:1px;background:#585858"></div>
<div style="left:276px;top:708px;width:79px;height:22px;background:#fff"></div>
<div style="left:276px;top:730px;width:79px;height:1px;background:#c2c2c2"></div>
<div class="gh" style="left:222px;top:731px;width:53px;height:22px;line-height:24px">y</div>
<div style="left:222px;top:753px;width:53px;height:1px;background:#585858"></div>
<div style="left:276px;top:731px;width:79px;height:22px;background:#fff"></div>
<div style="left:276px;top:753px;width:79px;height:1px;background:#c2c2c2"></div>
<div class="gh" style="left:222px;top:754px;width:53px;height:22px;line-height:24px">z</div>
<div style="left:222px;top:776px;width:53px;height:1px;background:#585858"></div>
<div style="left:276px;top:754px;width:79px;height:22px;background:#fff"></div>
<div style="left:276px;top:776px;width:79px;height:1px;background:#c2c2c2"></div>
<div class="gh" style="left:222px;top:777px;width:53px;height:22px;line-height:24px">L</div>
<div style="left:222px;top:799px;width:53px;height:1px;background:#585858"></div>
<div style="left:276px;top:777px;width:79px;height:22px;background:#e0e0e0"></div>
<div style="left:276px;top:799px;width:79px;height:1px;background:#c2c2c2"></div>
<div class="gh" style="left:222px;top:800px;width:53px;height:22px;line-height:24px">a</div>
<div style="left:222px;top:822px;width:53px;height:1px;background:#585858"></div>
<div style="left:276px;top:800px;width:79px;height:22px;background:#e0e0e0"></div>
<div style="left:276px;top:822px;width:79px;height:1px;background:#c2c2c2"></div>
<div class="gh" style="left:222px;top:823px;width:53px;height:22px;line-height:24px">b</div>
<div style="left:222px;top:845px;width:53px;height:1px;background:#585858"></div>
<div style="left:276px;top:823px;width:79px;height:22px;background:#e0e0e0"></div>
<div style="left:276px;top:845px;width:79px;height:1px;background:#c2c2c2"></div>
<div class="gh" style="left:222px;top:846px;width:53px;height:22px;line-height:24px">L</div>
<div style="left:222px;top:868px;width:53px;height:1px;background:#585858"></div>
<div style="left:276px;top:846px;width:79px;height:22px;background:#fff"></div>
<div style="left:276px;top:868px;width:79px;height:1px;background:#c2c2c2"></div>
<div class="gh" style="left:222px;top:869px;width:53px;height:22px;line-height:24px">C</div>
<div style="left:222px;top:891px;width:53px;height:1px;background:#585858"></div>
<div style="left:276px;top:869px;width:79px;height:22px;background:#fff"></div>
<div style="left:276px;top:891px;width:79px;height:1px;background:#c2c2c2"></div>
<div class="gh" style="left:222px;top:892px;width:53px;height:22px;line-height:24px">H</div>
<div style="left:222px;top:914px;width:53px;height:1px;background:#585858"></div>
<div style="left:276px;top:892px;width:79px;height:22px;background:#fff"></div>
<div style="left:276px;top:914px;width:79px;height:1px;background:#c2c2c2"></div>
<div class="gh" style="left:222px;top:915px;width:53px;height:22px;line-height:24px">L</div>
<div style="left:222px;top:937px;width:53px;height:1px;background:#585858"></div>
<div style="left:276px;top:915px;width:79px;height:22px;background:#e0e0e0"></div>
<div style="left:276px;top:937px;width:79px;height:1px;background:#c2c2c2"></div>
<div class="gh" style="left:222px;top:938px;width:53px;height:22px;line-height:24px">M</div>
<div style="left:222px;top:960px;width:53px;height:1px;background:#585858"></div>
<div style="left:276px;top:938px;width:79px;height:22px;background:#e0e0e0"></div>
<div style="left:276px;top:960px;width:79px;height:1px;background:#c2c2c2"></div>
<div class="gh" style="left:222px;top:961px;width:53px;height:22px;line-height:24px">S</div>
<div style="left:222px;top:983px;width:53px;height:1px;background:#585858"></div>
<div style="left:276px;top:961px;width:79px;height:22px;background:#e0e0e0"></div>
<div style="left:276px;top:983px;width:79px;height:1px;background:#c2c2c2"></div>
<div style="left:275px;top:432px;width:1px;height:552px;background:#585858"></div>
<div style="left:222px;top:984px;width:133px;height:23px;background:#a0a0a0"></div>
<svg style="left:360px;top:438px" width="9" height="7" viewBox="0 0 9 7" ><path d="M.5 6.5H8.5L4.5 .5Z" fill="#b4b4b4"/></svg>
<svg style="left:360px;top:996px" width="9" height="7" viewBox="0 0 9 7" ><path d="M.5 .5H8.5L4.5 6.5Z" fill="#b4b4b4"/></svg>
<div style="left:396px;top:410px;width:302px;height:22px;background:#fafafa"></div>
<div style="left:399px;top:412px;width:302px;height:22px;background:#fff;border:1px solid #bcbcbc"></div>
<div class="t vd" style="left:402.5px;top:418px;font-size:12px;letter-spacing:.25px" id="cb2">RGB Levels</div>
<svg style="left:685px;top:418px" width="12" height="10" viewBox="0 0 12 10" ><path d="M1.5 2.5L6 7.5L10.5 2.5" fill="none" stroke="#444" stroke-width="1.1"/></svg>
<div style="left:399px;top:440px;width:1494px;height:568px;background:#fff;border-top:2px solid #727272;border-left:2px solid #727272"></div>
<div style="left:399px;top:440px;width:1494px;height:1px;background:#a4a4a4"></div>
<div style="left:399px;top:440px;width:1px;height:568px;background:#a4a4a4"></div>
<div style="left:401px;top:442px;width:1490px;height:1px;background:#b4b4b4"></div>
<div style="left:401px;top:442px;width:1px;height:563px;background:#b4b4b4"></div>
<svg style="left:402px;top:443px" width="1489" height="562" viewBox="0 0 1489 562" ><defs><linearGradient id="cg" x1="0" y1="0" x2="1" y2="0"><stop offset="0" stop-color="#202020"/><stop offset="1" stop-color="#ffffff"/></linearGradient></defs><rect x="0" y="0" width="1489" height="562" fill="url(#cg)"/><rect x="0" y="0" width="1" height="562" fill="#0a4848"/><rect x="0" y="0" width="1489" height="1" fill="#0a4848"/><rect x="148" y="0" width="1" height="562" fill="#0a4848"/><rect x="297" y="0" width="1" height="562" fill="#0a4848"/><rect x="446" y="0" width="1" height="562" fill="#0a4848"/><rect x="595" y="0" width="1" height="562" fill="#0a4848"/><rect x="744" y="0" width="1" height="562" fill="#0a4848"/><rect x="892" y="0" width="1" height="562" fill="#0a4848"/><rect x="1041" y="0" width="1" height="562" fill="#0a4848"/><rect x="1190" y="0" width="1" height="562" fill="#0a4848"/><rect x="1339" y="0" width="1" height="562" fill="#0a4848"/><rect x="0" y="28" width="1489" height="1" fill="#0a4848"/><rect x="0" y="56" width="1489" height="1" fill="#0a4848"/><rect x="0" y="84" width="1489" height="1" fill="#0a4848"/><rect x="0" y="112" width="1489" height="1" fill="#0a4848"/><rect x="0" y="140" width="1489" height="1" fill="#0a4848"/><rect x="0" y="168" width="1489" height="1" fill="#0a4848"/><rect x="0" y="196" width="1489" height="1" fill="#0a4848"/><rect x="0" y="224" width="1489" height="1" fill="#0a4848"/><rect x="0" y="252" width="1489" height="1" fill="#0a4848"/><rect x="0" y="337" width="1489" height="1" fill="#0a4848"/><rect x="0" y="393" width="1489" height="1" fill="#0a4848"/><rect x="0" y="449" width="1489" height="1" fill="#0a4848"/><rect x="0" y="505" width="1489" height="1" fill="#0a4848"/><rect x="0" y="140" width="1489" height="1" fill="#181818"/><path d="M0 140.5H1489" stroke="#fff" stroke-width="1" stroke-dasharray="3 2"/><rect x="0" y="136" width="4" height="8" fill="#fff"/><rect x="1484" y="136" width="5" height="8" fill="#e4e4e4"/><text x="2.2" y="24" fill="#d8d8d8" font-family="Liberation Serif,serif" font-size="13" letter-spacing=".35">140%</text><text x="2.2" y="52" fill="#d8d8d8" font-family="Liberation Serif,serif" font-size="13" letter-spacing=".35">130%</text><text x="2.2" y="80" fill="#d8d8d8" font-family="Liberation Serif,serif" font-size="13" letter-spacing=".35">120%</text><text x="2.2" y="108" fill="#d8d8d8" font-family="Liberation Serif,serif" font-size="13" letter-spacing=".35">110%</text><text x="2.2" y="136" fill="#d8d8d8" font-family="Liberation Serif,serif" font-size="13" letter-spacing=".35">100%</text><text x="2.2" y="164" fill="#d8d8d8" font-family="Liberation Serif,serif" font-size="13" letter-spacing=".35">90%</text><text x="2.2" y="192" fill="#d8d8d8" font-family="Liberation Serif,serif" font-size="13" letter-spacing=".35">80%</text><text x="2.2" y="220" fill="#d8d8d8" font-family="Liberation Serif,serif" font-size="13" letter-spacing=".35">70%</text><text x="2.2" y="248" fill="#d8d8d8" font-family="Liberation Serif,serif" font-size="13" letter-spacing=".35">60%</text><text x="2.2" y="333" fill="#d8d8d8" font-family="Liberation Serif,serif" font-size="13" letter-spacing=".35">8</text><text x="2.2" y="389" fill="#d8d8d8" font-family="Liberation Serif,serif" font-size="13" letter-spacing=".35">6</text><text x="2.2" y="445" fill="#d8d8d8" font-family="Liberation Serif,serif" font-size="13" letter-spacing=".35">4</text><text x="2.2" y="501" fill="#d8d8d8" font-family="Liberation Serif,serif" font-size="13" letter-spacing=".35">2</text><text x="151" y="277" fill="rgb(230,230,230)" font-family="Liberation Serif,serif" font-size="13" letter-spacing=".35">10% White</text><text x="151" y="558" fill="rgb(230,230,230)" font-family="Liberation Serif,serif" font-size="13" letter-spacing=".35">10% White</text><text x="300" y="277" fill="rgb(204,204,204)" font-family="Liberation Serif,serif" font-size="13" letter-spacing=".35">20% White</text><text x="300" y="558" fill="rgb(204,204,204)" font-family="Liberation Serif,serif" font-size="13" letter-spacing=".35">20% White</text><text x="449" y="277" fill="rgb(178,178,178)" font-family="Liberation Serif,serif" font-size="13" letter-spacing=".35">30% White</text><text x="449" y="558" fill="rgb(178,178,178)" font-family="Liberation Serif,serif" font-size="13" letter-spacing=".35">30% White</text><text x="598" y="277" fill="rgb(153,153,153)" font-family="Liberation Serif,serif" font-size="13" letter-spacing=".35">40% White</text><text x="598" y="558" fill="rgb(153,153,153)" font-family="Liberation Serif,serif" font-size="13" letter-spacing=".35">40% White</text><text x="747" y="277" fill="rgb(128,128,128)" font-family="Liberation Serif,serif" font-size="13" letter-spacing=".35">50% White</text><text x="747" y="558" fill="rgb(128,128,128)" font-family="Liberation Serif,serif" font-size="13" letter-spacing=".35">50% White</text><text x="895" y="277" fill="rgb(102,102,102)" font-family="Liberation Serif,serif" font-size="13" letter-spacing=".35">60% White</text><text x="895" y="558" fill="rgb(102,102,102)" font-family="Liberation Serif,serif" font-size="13" letter-spacing=".35">60% White</text><text x="1044" y="277" fill="rgb(76,76,76)" font-family="Liberation Serif,serif" font-size="13" letter-spacing=".35">70% White</text><text x="1044" y="558" fill="rgb(76,76,76)" font-family="Liberation Serif,serif" font-size="13" letter-spacing=".35">70% White</text><text x="1193" y="277" fill="rgb(51,51,51)" font-family="Liberation Serif,serif" font-size="13" letter-spacing=".35">80% White</text><text x="1193" y="558" fill="rgb(51,51,51)" font-family="Liberation Serif,serif" font-size="13" letter-spacing=".35">80% White</text><text x="1342" y="277" fill="rgb(26,26,26)" font-family="Liberation Serif,serif" font-size="13" letter-spacing=".35">90% White</text><text x="1342" y="558" fill="rgb(26,26,26)" font-family="Liberation Serif,serif" font-size="13" letter-spacing=".35">90% White</text><text x="755.5" y="14" text-anchor="middle" font-family="Liberation Sans,sans-serif" font-weight="bold" font-size="14.5" fill="#dada1c">Gray Scale Balance w/gamma</text><text x="1478.5" y="520" text-anchor="end" font-family="Liberation Sans,sans-serif" font-weight="bold" font-size="16" fill="#a2a2a2">hcfr.sourceforge.net</text><polyline points="142,162.29999999999995 292,166 441,170 591,167 740,169 890,167 1039,167 1189,167 1338,165 1486.5,166" fill="none" stroke="#ff0000" stroke-width="2.2"/><rect x="138.5" y="158.79999999999995" width="7.4" height="7.4" fill="#ff0000"/><rect x="288.5" y="162.5" width="7.4" height="7.4" fill="#ff0000"/><rect x="437.5" y="166.5" width="7.4" height="7.4" fill="#ff0000"/><rect x="587.5" y="163.5" width="7.4" height="7.4" fill="#ff0000"/><rect x="736.5" y="165.5" width="7.4" height="7.4" fill="#ff0000"/><rect x="886.5" y="163.5" width="7.4" height="7.4" fill="#ff0000"/><rect x="1035.5" y="163.5" width="7.4" height="7.4" fill="#ff0000"/><rect x="1185.5" y="163.5" width="7.4" height="7.4" fill="#ff0000"/><rect x="1334.5" y="161.5" width="7.4" height="7.4" fill="#ff0000"/><rect x="1483.0" y="162.5" width="7.4" height="7.4" fill="#ff0000"/><polyline points="142,110 292,105 441,138 591,145 740,147 890,146 1039,146 1189,146 1338,145 1486.5,149" fill="none" stroke="#00ff00" stroke-width="2.2"/><rect x="138.5" y="106.5" width="7.4" height="7.4" fill="#00ff00"/><rect x="288.5" y="101.5" width="7.4" height="7.4" fill="#00ff00"/><rect x="437.5" y="134.5" width="7.4" height="7.4" fill="#00ff00"/><rect x="587.5" y="141.5" width="7.4" height="7.4" fill="#00ff00"/><rect x="736.5" y="143.5" width="7.4" height="7.4" fill="#00ff00"/><rect x="886.5" y="142.5" width="7.4" height="7.4" fill="#00ff00"/><rect x="1035.5" y="142.5" width="7.4" height="7.4" fill="#00ff00"/><rect x="1185.5" y="142.5" width="7.4" height="7.4" fill="#00ff00"/><rect x="1334.5" y="141.5" width="7.4" height="7.4" fill="#00ff00"/><rect x="1483.0" y="145.5" width="7.4" height="7.4" fill="#00ff00"/><polyline points="142,446 292,344 430,280.5" fill="none" stroke="#ff00ff" stroke-width="2.2"/><rect x="138.5" y="442.5" width="7.4" height="7.4" fill="#ff00ff"/><rect x="288.5" y="340.5" width="7.4" height="7.4" fill="#ff00ff"/></svg>
<div style="left:0px;top:1042px;width:1920px;height:19px;background:#f0f0f0"></div>
<div style="left:0px;top:1042px;width:1920px;height:1px;background:#000"></div>
<div style="left:0px;top:1043px;width:18px;height:18px;background:#f0f0f0;border-left:1px solid #fff;border-top:1px solid #fff;border-right:1px solid #8a8a8a;border-bottom:2px solid #000"></div>
<div style="left:18px;top:1043px;width:18px;height:18px;background:#f0f0f0;border-left:1px solid #fff;border-top:1px solid #fff;border-right:1px solid #8a8a8a;border-bottom:2px solid #000"></div>
<div style="left:35px;top:1043px;width:19px;height:18px;background:#f0f0f0;border-left:1px solid #fff;border-top:1px solid #fff;border-right:1px solid #8a8a8a;border-bottom:2px solid #000"></div>
<div style="left:53px;top:1042px;width:1px;height:19px;background:#000"></div>
<svg style="left:0px;top:1043px" width="54" height="18" viewBox="0 0 54 18" ><path d="M5.5 4.5L13 12.5M13 4.5L5.5 12.5" stroke="#000" stroke-width="1.2" fill="none"/><path d="M29 5V12.6L24.5 8.8Z M40.5 5V12.6L45 8.8Z" fill="#000"/></svg>
<svg style="left:0px;top:1042px" width="330" height="19" viewBox="0 0 330 19" ><path d="M55 1L62.5 18H119.5L128 1Z" fill="#fff"/><path d="M55 .5L62.5 18.5M128 .5L119 18.5 M125 6L131 18.5M194 .5L187 18.5 M187 .5L194 18.5 M246 .5L239.5 18.5 M239 .5L247 18.5 M321.5 .5L313 18.5" stroke="#000" stroke-width="1" fill="none"/><path d="M62.5 18H119.5 M131 18H187 M194 18H239.5 M247 18H313" stroke="#9a9a9a" stroke-width="1"/></svg>
<div class="t" style="left:67px;top:1046px;font:bold 11px 'Liberation Sans',sans-serif;letter-spacing:-.15px" id="tb1">Measures</div>
<div class="t" style="left:134px;top:1046.5px;font-size:10px;letter-spacing:-.15px">Luminance</div>
<div class="t" style="left:200px;top:1046.5px;font-size:10px;letter-spacing:-.15px">Gamma</div>
<div class="t" style="left:255px;top:1046.5px;font-size:10px;letter-spacing:-.15px">RGB Levels</div>
<svg style="left:1751px;top:1044px" width="15" height="15" viewBox="0 0 15 15" ><path d="M.8 .8H13.5V8L12 13.5H2.8L.8 8Z" fill="#808000" stroke="#1a1a00" stroke-width=".9"/><rect x="2.2" y="2.2" width="8" height="5.6" fill="#f01830"/><path d="M3 4.5C5 3 7 3.5 8 5L9.2 4V7H6.2L7.2 6C6.5 5 5 4.8 3.5 5.6Z" fill="#fff"/><rect x="8.3" y="9.3" width="4" height="4.2" fill="#ffff00" stroke="#1a1a00" stroke-width=".6"/><rect x="5.6" y="10" width="2" height="3.6" fill="#1a1a00"/></svg>
<div class="cb" style="left:1846px;top:1044.5px;width:12.5px;height:12.5px"></div>
<div class="t" style="left:1862px;top:1045px;font-size:11.5px;letter-spacing:-.2px">Reference</div>
<div style="left:0px;top:1061px;width:1920px;height:19px;background:#e9eff9"></div>
<div class="t" style="left:2.5px;top:1065.5px;font-size:11.5px;letter-spacing:-.25px">Ready</div>
<div style="left:1742px;top:1062px;width:75px;height:18px;border-left:1px solid #a9bcd8;border-top:1px solid #a9bcd8"></div>
<div style="left:1820px;top:1062px;width:28px;height:18px;border-left:1px solid #a9bcd8;border-top:1px solid #a9bcd8"></div>
<div style="left:1851px;top:1062px;width:33px;height:18px;border-left:1px solid #a9bcd8;border-top:1px solid #a9bcd8"></div>
<div style="left:1887px;top:1062px;width:33px;height:18px;border-left:1px solid #a9bcd8;border-top:1px solid #a9bcd8"></div>
<div class="t" style="left:1854px;top:1066px;font-size:11.5px">NUM</div>
</body></html>
